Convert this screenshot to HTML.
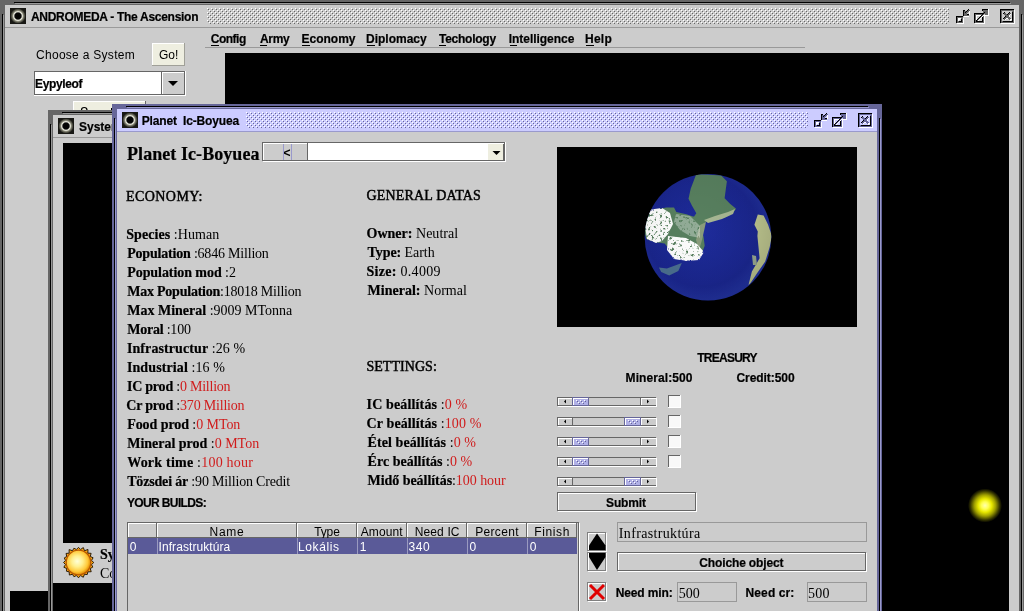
<!DOCTYPE html>
<html><head><meta charset="utf-8"><title>ANDROMEDA - The Ascension</title>
<style>html,body{margin:0;padding:0;background:#cccccc;width:1024px;height:611px;overflow:hidden;font-family:"Liberation Sans",sans-serif;}
svg text{white-space:pre}</style></head><body>
<svg width="1024" height="611" viewBox="0 0 1024 611" shape-rendering="crispEdges" style="display:block;will-change:transform">
<defs>
<radialGradient id="ring" cx="0.5" cy="0.5" r="0.5"><stop offset="0" stop-color="#000"/><stop offset="0.4" stop-color="#060606"/><stop offset="0.57" stop-color="#ecece0"/><stop offset="0.74" stop-color="#7c7c6c"/><stop offset="1" stop-color="#1c1c18"/></radialGradient>
<g id="ficon"><rect x="0" y="0" width="16" height="16" fill="#181814"/><circle cx="8" cy="8" r="7.6" fill="url(#ring)" shape-rendering="geometricPrecision"/></g>
<g id="aclose"><rect x="1" y="1" width="1" height="1" fill="#000"/><rect x="2" y="1" width="1" height="1" fill="#000"/><rect x="3" y="1" width="1" height="1" fill="#000"/><rect x="4" y="1" width="1" height="1" fill="#000"/><rect x="5" y="1" width="1" height="1" fill="#000"/><rect x="6" y="1" width="1" height="1" fill="#000"/><rect x="7" y="1" width="1" height="1" fill="#000"/><rect x="8" y="1" width="1" height="1" fill="#000"/><rect x="9" y="1" width="1" height="1" fill="#000"/><rect x="10" y="1" width="1" height="1" fill="#000"/><rect x="11" y="1" width="1" height="1" fill="#000"/><rect x="12" y="1" width="1" height="1" fill="#000"/><rect x="13" y="1" width="1" height="1" fill="#000"/><rect x="14" y="1" width="1" height="1" fill="#000"/><rect x="1" y="2" width="1" height="1" fill="#000"/><rect x="2" y="2" width="1" height="1" fill="#666699"/><rect x="3" y="2" width="1" height="1" fill="#666699"/><rect x="4" y="2" width="1" height="1" fill="#666699"/><rect x="5" y="2" width="1" height="1" fill="#666699"/><rect x="6" y="2" width="1" height="1" fill="#666699"/><rect x="7" y="2" width="1" height="1" fill="#666699"/><rect x="8" y="2" width="1" height="1" fill="#666699"/><rect x="9" y="2" width="1" height="1" fill="#666699"/><rect x="10" y="2" width="1" height="1" fill="#666699"/><rect x="11" y="2" width="1" height="1" fill="#666699"/><rect x="12" y="2" width="1" height="1" fill="#666699"/><rect x="13" y="2" width="1" height="1" fill="#666699"/><rect x="14" y="2" width="1" height="1" fill="#666699"/><rect x="15" y="2" width="1" height="1" fill="#fff"/><rect x="1" y="3" width="1" height="1" fill="#000"/><rect x="2" y="3" width="1" height="1" fill="#666699"/><rect x="13" y="3" width="1" height="1" fill="#666699"/><rect x="14" y="3" width="1" height="1" fill="#666699"/><rect x="15" y="3" width="1" height="1" fill="#fff"/><rect x="1" y="4" width="1" height="1" fill="#000"/><rect x="2" y="4" width="1" height="1" fill="#666699"/><rect x="5" y="4" width="1" height="1" fill="#000"/><rect x="10" y="4" width="1" height="1" fill="#000"/><rect x="13" y="4" width="1" height="1" fill="#000"/><rect x="14" y="4" width="1" height="1" fill="#666699"/><rect x="15" y="4" width="1" height="1" fill="#fff"/><rect x="1" y="5" width="1" height="1" fill="#000"/><rect x="2" y="5" width="1" height="1" fill="#666699"/><rect x="4" y="5" width="1" height="1" fill="#000"/><rect x="5" y="5" width="1" height="1" fill="#666699"/><rect x="6" y="5" width="1" height="1" fill="#666699"/><rect x="9" y="5" width="1" height="1" fill="#000"/><rect x="10" y="5" width="1" height="1" fill="#666699"/><rect x="11" y="5" width="1" height="1" fill="#666699"/><rect x="13" y="5" width="1" height="1" fill="#000"/><rect x="14" y="5" width="1" height="1" fill="#666699"/><rect x="15" y="5" width="1" height="1" fill="#fff"/><rect x="1" y="6" width="1" height="1" fill="#000"/><rect x="2" y="6" width="1" height="1" fill="#666699"/><rect x="5" y="6" width="1" height="1" fill="#666699"/><rect x="6" y="6" width="1" height="1" fill="#666699"/><rect x="7" y="6" width="1" height="1" fill="#666699"/><rect x="8" y="6" width="1" height="1" fill="#000"/><rect x="9" y="6" width="1" height="1" fill="#666699"/><rect x="10" y="6" width="1" height="1" fill="#666699"/><rect x="11" y="6" width="1" height="1" fill="#fff"/><rect x="13" y="6" width="1" height="1" fill="#000"/><rect x="14" y="6" width="1" height="1" fill="#666699"/><rect x="15" y="6" width="1" height="1" fill="#fff"/><rect x="1" y="7" width="1" height="1" fill="#000"/><rect x="2" y="7" width="1" height="1" fill="#666699"/><rect x="6" y="7" width="1" height="1" fill="#666699"/><rect x="7" y="7" width="1" height="1" fill="#666699"/><rect x="8" y="7" width="1" height="1" fill="#666699"/><rect x="9" y="7" width="1" height="1" fill="#666699"/><rect x="10" y="7" width="1" height="1" fill="#fff"/><rect x="13" y="7" width="1" height="1" fill="#000"/><rect x="14" y="7" width="1" height="1" fill="#666699"/><rect x="15" y="7" width="1" height="1" fill="#fff"/><rect x="1" y="8" width="1" height="1" fill="#000"/><rect x="2" y="8" width="1" height="1" fill="#666699"/><rect x="6" y="8" width="1" height="1" fill="#000"/><rect x="7" y="8" width="1" height="1" fill="#666699"/><rect x="8" y="8" width="1" height="1" fill="#666699"/><rect x="9" y="8" width="1" height="1" fill="#666699"/><rect x="10" y="8" width="1" height="1" fill="#fff"/><rect x="13" y="8" width="1" height="1" fill="#000"/><rect x="14" y="8" width="1" height="1" fill="#666699"/><rect x="15" y="8" width="1" height="1" fill="#fff"/><rect x="1" y="9" width="1" height="1" fill="#000"/><rect x="2" y="9" width="1" height="1" fill="#666699"/><rect x="5" y="9" width="1" height="1" fill="#000"/><rect x="6" y="9" width="1" height="1" fill="#666699"/><rect x="7" y="9" width="1" height="1" fill="#666699"/><rect x="8" y="9" width="1" height="1" fill="#666699"/><rect x="9" y="9" width="1" height="1" fill="#666699"/><rect x="10" y="9" width="1" height="1" fill="#666699"/><rect x="13" y="9" width="1" height="1" fill="#000"/><rect x="14" y="9" width="1" height="1" fill="#666699"/><rect x="15" y="9" width="1" height="1" fill="#fff"/><rect x="1" y="10" width="1" height="1" fill="#000"/><rect x="2" y="10" width="1" height="1" fill="#666699"/><rect x="4" y="10" width="1" height="1" fill="#000"/><rect x="5" y="10" width="1" height="1" fill="#666699"/><rect x="6" y="10" width="1" height="1" fill="#666699"/><rect x="7" y="10" width="1" height="1" fill="#fff"/><rect x="8" y="10" width="1" height="1" fill="#fff"/><rect x="9" y="10" width="1" height="1" fill="#666699"/><rect x="10" y="10" width="1" height="1" fill="#666699"/><rect x="11" y="10" width="1" height="1" fill="#666699"/><rect x="13" y="10" width="1" height="1" fill="#000"/><rect x="14" y="10" width="1" height="1" fill="#666699"/><rect x="15" y="10" width="1" height="1" fill="#fff"/><rect x="1" y="11" width="1" height="1" fill="#000"/><rect x="2" y="11" width="1" height="1" fill="#666699"/><rect x="5" y="11" width="1" height="1" fill="#666699"/><rect x="6" y="11" width="1" height="1" fill="#fff"/><rect x="10" y="11" width="1" height="1" fill="#666699"/><rect x="11" y="11" width="1" height="1" fill="#fff"/><rect x="12" y="11" width="1" height="1" fill="#fff"/><rect x="13" y="11" width="1" height="1" fill="#000"/><rect x="14" y="11" width="1" height="1" fill="#666699"/><rect x="15" y="11" width="1" height="1" fill="#fff"/><rect x="1" y="12" width="1" height="1" fill="#000"/><rect x="2" y="12" width="1" height="1" fill="#666699"/><rect x="11" y="12" width="1" height="1" fill="#fff"/><rect x="13" y="12" width="1" height="1" fill="#000"/><rect x="14" y="12" width="1" height="1" fill="#666699"/><rect x="15" y="12" width="1" height="1" fill="#fff"/><rect x="1" y="13" width="1" height="1" fill="#000"/><rect x="2" y="13" width="1" height="1" fill="#666699"/><rect x="3" y="13" width="1" height="1" fill="#666699"/><rect x="4" y="13" width="1" height="1" fill="#000"/><rect x="5" y="13" width="1" height="1" fill="#000"/><rect x="6" y="13" width="1" height="1" fill="#000"/><rect x="7" y="13" width="1" height="1" fill="#000"/><rect x="8" y="13" width="1" height="1" fill="#000"/><rect x="9" y="13" width="1" height="1" fill="#000"/><rect x="10" y="13" width="1" height="1" fill="#000"/><rect x="11" y="13" width="1" height="1" fill="#000"/><rect x="12" y="13" width="1" height="1" fill="#000"/><rect x="13" y="13" width="1" height="1" fill="#000"/><rect x="14" y="13" width="1" height="1" fill="#666699"/><rect x="15" y="13" width="1" height="1" fill="#fff"/><rect x="1" y="14" width="1" height="1" fill="#000"/><rect x="2" y="14" width="1" height="1" fill="#666699"/><rect x="3" y="14" width="1" height="1" fill="#666699"/><rect x="4" y="14" width="1" height="1" fill="#666699"/><rect x="5" y="14" width="1" height="1" fill="#666699"/><rect x="6" y="14" width="1" height="1" fill="#666699"/><rect x="7" y="14" width="1" height="1" fill="#666699"/><rect x="8" y="14" width="1" height="1" fill="#666699"/><rect x="9" y="14" width="1" height="1" fill="#666699"/><rect x="10" y="14" width="1" height="1" fill="#666699"/><rect x="11" y="14" width="1" height="1" fill="#666699"/><rect x="12" y="14" width="1" height="1" fill="#666699"/><rect x="13" y="14" width="1" height="1" fill="#666699"/><rect x="14" y="14" width="1" height="1" fill="#666699"/><rect x="15" y="14" width="1" height="1" fill="#fff"/><rect x="2" y="15" width="1" height="1" fill="#fff"/><rect x="3" y="15" width="1" height="1" fill="#fff"/><rect x="4" y="15" width="1" height="1" fill="#fff"/><rect x="5" y="15" width="1" height="1" fill="#fff"/><rect x="6" y="15" width="1" height="1" fill="#fff"/><rect x="7" y="15" width="1" height="1" fill="#fff"/><rect x="8" y="15" width="1" height="1" fill="#fff"/><rect x="9" y="15" width="1" height="1" fill="#fff"/><rect x="10" y="15" width="1" height="1" fill="#fff"/><rect x="11" y="15" width="1" height="1" fill="#fff"/><rect x="12" y="15" width="1" height="1" fill="#fff"/><rect x="13" y="15" width="1" height="1" fill="#fff"/><rect x="14" y="15" width="1" height="1" fill="#fff"/><rect x="15" y="15" width="1" height="1" fill="#fff"/></g>
<g id="amax"><rect x="9" y="1" width="1" height="1" fill="#000"/><rect x="10" y="1" width="1" height="1" fill="#000"/><rect x="11" y="1" width="1" height="1" fill="#000"/><rect x="12" y="1" width="1" height="1" fill="#000"/><rect x="13" y="1" width="1" height="1" fill="#000"/><rect x="14" y="1" width="1" height="1" fill="#000"/><rect x="15" y="1" width="1" height="1" fill="#fff"/><rect x="9" y="2" width="1" height="1" fill="#000"/><rect x="10" y="2" width="1" height="1" fill="#666699"/><rect x="11" y="2" width="1" height="1" fill="#666699"/><rect x="12" y="2" width="1" height="1" fill="#666699"/><rect x="13" y="2" width="1" height="1" fill="#666699"/><rect x="14" y="2" width="1" height="1" fill="#666699"/><rect x="15" y="2" width="1" height="1" fill="#fff"/><rect x="10" y="3" width="1" height="1" fill="#666699"/><rect x="11" y="3" width="1" height="1" fill="#666699"/><rect x="12" y="3" width="1" height="1" fill="#666699"/><rect x="13" y="3" width="1" height="1" fill="#666699"/><rect x="14" y="3" width="1" height="1" fill="#666699"/><rect x="15" y="3" width="1" height="1" fill="#fff"/><rect x="10" y="4" width="1" height="1" fill="#666699"/><rect x="11" y="4" width="1" height="1" fill="#000"/><rect x="12" y="4" width="1" height="1" fill="#666699"/><rect x="13" y="4" width="1" height="1" fill="#666699"/><rect x="14" y="4" width="1" height="1" fill="#666699"/><rect x="15" y="4" width="1" height="1" fill="#fff"/><rect x="1" y="5" width="1" height="1" fill="#000"/><rect x="2" y="5" width="1" height="1" fill="#000"/><rect x="3" y="5" width="1" height="1" fill="#000"/><rect x="4" y="5" width="1" height="1" fill="#000"/><rect x="5" y="5" width="1" height="1" fill="#000"/><rect x="6" y="5" width="1" height="1" fill="#000"/><rect x="7" y="5" width="1" height="1" fill="#000"/><rect x="8" y="5" width="1" height="1" fill="#000"/><rect x="9" y="5" width="1" height="1" fill="#000"/><rect x="10" y="5" width="1" height="1" fill="#000"/><rect x="11" y="5" width="1" height="1" fill="#666699"/><rect x="12" y="5" width="1" height="1" fill="#666699"/><rect x="13" y="5" width="1" height="1" fill="#666699"/><rect x="14" y="5" width="1" height="1" fill="#666699"/><rect x="15" y="5" width="1" height="1" fill="#fff"/><rect x="1" y="6" width="1" height="1" fill="#000"/><rect x="2" y="6" width="1" height="1" fill="#666699"/><rect x="3" y="6" width="1" height="1" fill="#666699"/><rect x="4" y="6" width="1" height="1" fill="#666699"/><rect x="5" y="6" width="1" height="1" fill="#666699"/><rect x="6" y="6" width="1" height="1" fill="#666699"/><rect x="7" y="6" width="1" height="1" fill="#666699"/><rect x="8" y="6" width="1" height="1" fill="#666699"/><rect x="9" y="6" width="1" height="1" fill="#000"/><rect x="10" y="6" width="1" height="1" fill="#666699"/><rect x="12" y="6" width="1" height="1" fill="#666699"/><rect x="13" y="6" width="1" height="1" fill="#666699"/><rect x="14" y="6" width="1" height="1" fill="#666699"/><rect x="15" y="6" width="1" height="1" fill="#fff"/><rect x="1" y="7" width="1" height="1" fill="#000"/><rect x="2" y="7" width="1" height="1" fill="#666699"/><rect x="3" y="7" width="1" height="1" fill="#fff"/><rect x="4" y="7" width="1" height="1" fill="#fff"/><rect x="5" y="7" width="1" height="1" fill="#fff"/><rect x="6" y="7" width="1" height="1" fill="#fff"/><rect x="7" y="7" width="1" height="1" fill="#fff"/><rect x="8" y="7" width="1" height="1" fill="#000"/><rect x="9" y="7" width="1" height="1" fill="#666699"/><rect x="10" y="7" width="1" height="1" fill="#fff"/><rect x="11" y="7" width="1" height="1" fill="#fff"/><rect x="12" y="7" width="1" height="1" fill="#fff"/><rect x="13" y="7" width="1" height="1" fill="#fff"/><rect x="14" y="7" width="1" height="1" fill="#fff"/><rect x="15" y="7" width="1" height="1" fill="#fff"/><rect x="1" y="8" width="1" height="1" fill="#000"/><rect x="2" y="8" width="1" height="1" fill="#666699"/><rect x="3" y="8" width="1" height="1" fill="#fff"/><rect x="4" y="8" width="1" height="1" fill="#ccccff"/><rect x="5" y="8" width="1" height="1" fill="#ccccff"/><rect x="6" y="8" width="1" height="1" fill="#ccccff"/><rect x="7" y="8" width="1" height="1" fill="#000"/><rect x="8" y="8" width="1" height="1" fill="#666699"/><rect x="9" y="8" width="1" height="1" fill="#fff"/><rect x="10" y="8" width="1" height="1" fill="#666699"/><rect x="11" y="8" width="1" height="1" fill="#fff"/><rect x="1" y="9" width="1" height="1" fill="#000"/><rect x="2" y="9" width="1" height="1" fill="#666699"/><rect x="3" y="9" width="1" height="1" fill="#fff"/><rect x="4" y="9" width="1" height="1" fill="#ccccff"/><rect x="5" y="9" width="1" height="1" fill="#ccccff"/><rect x="6" y="9" width="1" height="1" fill="#000"/><rect x="7" y="9" width="1" height="1" fill="#666699"/><rect x="8" y="9" width="1" height="1" fill="#fff"/><rect x="9" y="9" width="1" height="1" fill="#000"/><rect x="10" y="9" width="1" height="1" fill="#666699"/><rect x="11" y="9" width="1" height="1" fill="#fff"/><rect x="1" y="10" width="1" height="1" fill="#000"/><rect x="2" y="10" width="1" height="1" fill="#666699"/><rect x="3" y="10" width="1" height="1" fill="#fff"/><rect x="4" y="10" width="1" height="1" fill="#ccccff"/><rect x="5" y="10" width="1" height="1" fill="#000"/><rect x="6" y="10" width="1" height="1" fill="#666699"/><rect x="7" y="10" width="1" height="1" fill="#fff"/><rect x="8" y="10" width="1" height="1" fill="#ccccff"/><rect x="9" y="10" width="1" height="1" fill="#000"/><rect x="10" y="10" width="1" height="1" fill="#666699"/><rect x="11" y="10" width="1" height="1" fill="#fff"/><rect x="1" y="11" width="1" height="1" fill="#000"/><rect x="2" y="11" width="1" height="1" fill="#666699"/><rect x="3" y="11" width="1" height="1" fill="#fff"/><rect x="4" y="11" width="1" height="1" fill="#000"/><rect x="5" y="11" width="1" height="1" fill="#666699"/><rect x="6" y="11" width="1" height="1" fill="#fff"/><rect x="7" y="11" width="1" height="1" fill="#ccccff"/><rect x="8" y="11" width="1" height="1" fill="#ccccff"/><rect x="9" y="11" width="1" height="1" fill="#000"/><rect x="10" y="11" width="1" height="1" fill="#666699"/><rect x="11" y="11" width="1" height="1" fill="#fff"/><rect x="1" y="12" width="1" height="1" fill="#000"/><rect x="2" y="12" width="1" height="1" fill="#666699"/><rect x="3" y="12" width="1" height="1" fill="#000"/><rect x="4" y="12" width="1" height="1" fill="#666699"/><rect x="5" y="12" width="1" height="1" fill="#fff"/><rect x="6" y="12" width="1" height="1" fill="#ccccff"/><rect x="7" y="12" width="1" height="1" fill="#ccccff"/><rect x="8" y="12" width="1" height="1" fill="#ccccff"/><rect x="9" y="12" width="1" height="1" fill="#000"/><rect x="10" y="12" width="1" height="1" fill="#666699"/><rect x="11" y="12" width="1" height="1" fill="#fff"/><rect x="1" y="13" width="1" height="1" fill="#000"/><rect x="2" y="13" width="1" height="1" fill="#666699"/><rect x="3" y="13" width="1" height="1" fill="#000"/><rect x="4" y="13" width="1" height="1" fill="#000"/><rect x="5" y="13" width="1" height="1" fill="#000"/><rect x="6" y="13" width="1" height="1" fill="#000"/><rect x="7" y="13" width="1" height="1" fill="#000"/><rect x="8" y="13" width="1" height="1" fill="#000"/><rect x="9" y="13" width="1" height="1" fill="#000"/><rect x="10" y="13" width="1" height="1" fill="#666699"/><rect x="11" y="13" width="1" height="1" fill="#fff"/><rect x="1" y="14" width="1" height="1" fill="#000"/><rect x="2" y="14" width="1" height="1" fill="#666699"/><rect x="3" y="14" width="1" height="1" fill="#666699"/><rect x="4" y="14" width="1" height="1" fill="#666699"/><rect x="5" y="14" width="1" height="1" fill="#666699"/><rect x="6" y="14" width="1" height="1" fill="#666699"/><rect x="7" y="14" width="1" height="1" fill="#666699"/><rect x="8" y="14" width="1" height="1" fill="#666699"/><rect x="9" y="14" width="1" height="1" fill="#666699"/><rect x="10" y="14" width="1" height="1" fill="#666699"/><rect x="11" y="14" width="1" height="1" fill="#fff"/><rect x="2" y="15" width="1" height="1" fill="#fff"/><rect x="3" y="15" width="1" height="1" fill="#fff"/><rect x="4" y="15" width="1" height="1" fill="#fff"/><rect x="5" y="15" width="1" height="1" fill="#fff"/><rect x="6" y="15" width="1" height="1" fill="#fff"/><rect x="7" y="15" width="1" height="1" fill="#fff"/><rect x="8" y="15" width="1" height="1" fill="#fff"/><rect x="9" y="15" width="1" height="1" fill="#fff"/><rect x="10" y="15" width="1" height="1" fill="#fff"/><rect x="11" y="15" width="1" height="1" fill="#fff"/></g>
<g id="amin"><rect x="13" y="1" width="1" height="1" fill="#000"/><rect x="8" y="2" width="1" height="1" fill="#000"/><rect x="9" y="2" width="1" height="1" fill="#000"/><rect x="12" y="2" width="1" height="1" fill="#000"/><rect x="13" y="2" width="1" height="1" fill="#666699"/><rect x="14" y="2" width="1" height="1" fill="#666699"/><rect x="8" y="3" width="1" height="1" fill="#000"/><rect x="9" y="3" width="1" height="1" fill="#666699"/><rect x="10" y="3" width="1" height="1" fill="#666699"/><rect x="11" y="3" width="1" height="1" fill="#000"/><rect x="12" y="3" width="1" height="1" fill="#666699"/><rect x="13" y="3" width="1" height="1" fill="#666699"/><rect x="14" y="3" width="1" height="1" fill="#fff"/><rect x="8" y="4" width="1" height="1" fill="#000"/><rect x="9" y="4" width="1" height="1" fill="#666699"/><rect x="10" y="4" width="1" height="1" fill="#000"/><rect x="11" y="4" width="1" height="1" fill="#666699"/><rect x="12" y="4" width="1" height="1" fill="#666699"/><rect x="14" y="4" width="1" height="1" fill="#fff"/><rect x="8" y="5" width="1" height="1" fill="#000"/><rect x="9" y="5" width="1" height="1" fill="#666699"/><rect x="10" y="5" width="1" height="1" fill="#666699"/><rect x="11" y="5" width="1" height="1" fill="#666699"/><rect x="14" y="5" width="1" height="1" fill="#fff"/><rect x="8" y="6" width="1" height="1" fill="#000"/><rect x="9" y="6" width="1" height="1" fill="#666699"/><rect x="10" y="6" width="1" height="1" fill="#666699"/><rect x="11" y="6" width="1" height="1" fill="#666699"/><rect x="12" y="6" width="1" height="1" fill="#000"/><rect x="13" y="6" width="1" height="1" fill="#000"/><rect x="14" y="6" width="1" height="1" fill="#fff"/><rect x="8" y="7" width="1" height="1" fill="#000"/><rect x="9" y="7" width="1" height="1" fill="#666699"/><rect x="10" y="7" width="1" height="1" fill="#666699"/><rect x="11" y="7" width="1" height="1" fill="#666699"/><rect x="12" y="7" width="1" height="1" fill="#666699"/><rect x="13" y="7" width="1" height="1" fill="#666699"/><rect x="1" y="8" width="1" height="1" fill="#000"/><rect x="2" y="8" width="1" height="1" fill="#000"/><rect x="3" y="8" width="1" height="1" fill="#000"/><rect x="4" y="8" width="1" height="1" fill="#000"/><rect x="5" y="8" width="1" height="1" fill="#000"/><rect x="6" y="8" width="1" height="1" fill="#000"/><rect x="7" y="8" width="1" height="1" fill="#000"/><rect x="9" y="8" width="1" height="1" fill="#fff"/><rect x="10" y="8" width="1" height="1" fill="#fff"/><rect x="11" y="8" width="1" height="1" fill="#fff"/><rect x="12" y="8" width="1" height="1" fill="#fff"/><rect x="13" y="8" width="1" height="1" fill="#fff"/><rect x="1" y="9" width="1" height="1" fill="#000"/><rect x="2" y="9" width="1" height="1" fill="#666699"/><rect x="3" y="9" width="1" height="1" fill="#666699"/><rect x="4" y="9" width="1" height="1" fill="#666699"/><rect x="5" y="9" width="1" height="1" fill="#666699"/><rect x="6" y="9" width="1" height="1" fill="#666699"/><rect x="7" y="9" width="1" height="1" fill="#666699"/><rect x="1" y="10" width="1" height="1" fill="#000"/><rect x="2" y="10" width="1" height="1" fill="#666699"/><rect x="3" y="10" width="1" height="1" fill="#fff"/><rect x="4" y="10" width="1" height="1" fill="#fff"/><rect x="5" y="10" width="1" height="1" fill="#fff"/><rect x="6" y="10" width="1" height="1" fill="#666699"/><rect x="7" y="10" width="1" height="1" fill="#666699"/><rect x="8" y="10" width="1" height="1" fill="#fff"/><rect x="1" y="11" width="1" height="1" fill="#000"/><rect x="2" y="11" width="1" height="1" fill="#666699"/><rect x="3" y="11" width="1" height="1" fill="#fff"/><rect x="4" y="11" width="1" height="1" fill="#fff"/><rect x="5" y="11" width="1" height="1" fill="#ccccff"/><rect x="6" y="11" width="1" height="1" fill="#000"/><rect x="7" y="11" width="1" height="1" fill="#666699"/><rect x="8" y="11" width="1" height="1" fill="#fff"/><rect x="1" y="12" width="1" height="1" fill="#000"/><rect x="2" y="12" width="1" height="1" fill="#666699"/><rect x="3" y="12" width="1" height="1" fill="#fff"/><rect x="4" y="12" width="1" height="1" fill="#ccccff"/><rect x="5" y="12" width="1" height="1" fill="#ccccff"/><rect x="6" y="12" width="1" height="1" fill="#000"/><rect x="7" y="12" width="1" height="1" fill="#666699"/><rect x="8" y="12" width="1" height="1" fill="#fff"/><rect x="1" y="13" width="1" height="1" fill="#000"/><rect x="2" y="13" width="1" height="1" fill="#666699"/><rect x="3" y="13" width="1" height="1" fill="#666699"/><rect x="4" y="13" width="1" height="1" fill="#000"/><rect x="5" y="13" width="1" height="1" fill="#000"/><rect x="6" y="13" width="1" height="1" fill="#000"/><rect x="7" y="13" width="1" height="1" fill="#666699"/><rect x="8" y="13" width="1" height="1" fill="#fff"/><rect x="1" y="14" width="1" height="1" fill="#000"/><rect x="2" y="14" width="1" height="1" fill="#666699"/><rect x="3" y="14" width="1" height="1" fill="#666699"/><rect x="4" y="14" width="1" height="1" fill="#666699"/><rect x="5" y="14" width="1" height="1" fill="#666699"/><rect x="6" y="14" width="1" height="1" fill="#666699"/><rect x="7" y="14" width="1" height="1" fill="#666699"/><rect x="8" y="14" width="1" height="1" fill="#fff"/><rect x="2" y="15" width="1" height="1" fill="#fff"/><rect x="3" y="15" width="1" height="1" fill="#fff"/><rect x="4" y="15" width="1" height="1" fill="#fff"/><rect x="5" y="15" width="1" height="1" fill="#fff"/><rect x="6" y="15" width="1" height="1" fill="#fff"/><rect x="7" y="15" width="1" height="1" fill="#fff"/><rect x="8" y="15" width="1" height="1" fill="#fff"/></g>
<g id="iclose"><rect x="1" y="1" width="1" height="1" fill="#000"/><rect x="2" y="1" width="1" height="1" fill="#000"/><rect x="3" y="1" width="1" height="1" fill="#000"/><rect x="4" y="1" width="1" height="1" fill="#000"/><rect x="5" y="1" width="1" height="1" fill="#000"/><rect x="6" y="1" width="1" height="1" fill="#000"/><rect x="7" y="1" width="1" height="1" fill="#000"/><rect x="8" y="1" width="1" height="1" fill="#000"/><rect x="9" y="1" width="1" height="1" fill="#000"/><rect x="10" y="1" width="1" height="1" fill="#000"/><rect x="11" y="1" width="1" height="1" fill="#000"/><rect x="12" y="1" width="1" height="1" fill="#000"/><rect x="13" y="1" width="1" height="1" fill="#000"/><rect x="14" y="1" width="1" height="1" fill="#000"/><rect x="1" y="2" width="1" height="1" fill="#000"/><rect x="2" y="2" width="1" height="1" fill="#666666"/><rect x="3" y="2" width="1" height="1" fill="#666666"/><rect x="4" y="2" width="1" height="1" fill="#666666"/><rect x="5" y="2" width="1" height="1" fill="#666666"/><rect x="6" y="2" width="1" height="1" fill="#666666"/><rect x="7" y="2" width="1" height="1" fill="#666666"/><rect x="8" y="2" width="1" height="1" fill="#666666"/><rect x="9" y="2" width="1" height="1" fill="#666666"/><rect x="10" y="2" width="1" height="1" fill="#666666"/><rect x="11" y="2" width="1" height="1" fill="#666666"/><rect x="12" y="2" width="1" height="1" fill="#666666"/><rect x="13" y="2" width="1" height="1" fill="#666666"/><rect x="14" y="2" width="1" height="1" fill="#666666"/><rect x="15" y="2" width="1" height="1" fill="#fff"/><rect x="1" y="3" width="1" height="1" fill="#000"/><rect x="2" y="3" width="1" height="1" fill="#666666"/><rect x="13" y="3" width="1" height="1" fill="#666666"/><rect x="14" y="3" width="1" height="1" fill="#666666"/><rect x="15" y="3" width="1" height="1" fill="#fff"/><rect x="1" y="4" width="1" height="1" fill="#000"/><rect x="2" y="4" width="1" height="1" fill="#666666"/><rect x="5" y="4" width="1" height="1" fill="#000"/><rect x="10" y="4" width="1" height="1" fill="#000"/><rect x="13" y="4" width="1" height="1" fill="#000"/><rect x="14" y="4" width="1" height="1" fill="#666666"/><rect x="15" y="4" width="1" height="1" fill="#fff"/><rect x="1" y="5" width="1" height="1" fill="#000"/><rect x="2" y="5" width="1" height="1" fill="#666666"/><rect x="4" y="5" width="1" height="1" fill="#000"/><rect x="5" y="5" width="1" height="1" fill="#666666"/><rect x="6" y="5" width="1" height="1" fill="#666666"/><rect x="9" y="5" width="1" height="1" fill="#000"/><rect x="10" y="5" width="1" height="1" fill="#666666"/><rect x="11" y="5" width="1" height="1" fill="#666666"/><rect x="13" y="5" width="1" height="1" fill="#000"/><rect x="14" y="5" width="1" height="1" fill="#666666"/><rect x="15" y="5" width="1" height="1" fill="#fff"/><rect x="1" y="6" width="1" height="1" fill="#000"/><rect x="2" y="6" width="1" height="1" fill="#666666"/><rect x="5" y="6" width="1" height="1" fill="#666666"/><rect x="6" y="6" width="1" height="1" fill="#666666"/><rect x="7" y="6" width="1" height="1" fill="#666666"/><rect x="8" y="6" width="1" height="1" fill="#000"/><rect x="9" y="6" width="1" height="1" fill="#666666"/><rect x="10" y="6" width="1" height="1" fill="#666666"/><rect x="11" y="6" width="1" height="1" fill="#fff"/><rect x="13" y="6" width="1" height="1" fill="#000"/><rect x="14" y="6" width="1" height="1" fill="#666666"/><rect x="15" y="6" width="1" height="1" fill="#fff"/><rect x="1" y="7" width="1" height="1" fill="#000"/><rect x="2" y="7" width="1" height="1" fill="#666666"/><rect x="6" y="7" width="1" height="1" fill="#666666"/><rect x="7" y="7" width="1" height="1" fill="#666666"/><rect x="8" y="7" width="1" height="1" fill="#666666"/><rect x="9" y="7" width="1" height="1" fill="#666666"/><rect x="10" y="7" width="1" height="1" fill="#fff"/><rect x="13" y="7" width="1" height="1" fill="#000"/><rect x="14" y="7" width="1" height="1" fill="#666666"/><rect x="15" y="7" width="1" height="1" fill="#fff"/><rect x="1" y="8" width="1" height="1" fill="#000"/><rect x="2" y="8" width="1" height="1" fill="#666666"/><rect x="6" y="8" width="1" height="1" fill="#000"/><rect x="7" y="8" width="1" height="1" fill="#666666"/><rect x="8" y="8" width="1" height="1" fill="#666666"/><rect x="9" y="8" width="1" height="1" fill="#666666"/><rect x="10" y="8" width="1" height="1" fill="#fff"/><rect x="13" y="8" width="1" height="1" fill="#000"/><rect x="14" y="8" width="1" height="1" fill="#666666"/><rect x="15" y="8" width="1" height="1" fill="#fff"/><rect x="1" y="9" width="1" height="1" fill="#000"/><rect x="2" y="9" width="1" height="1" fill="#666666"/><rect x="5" y="9" width="1" height="1" fill="#000"/><rect x="6" y="9" width="1" height="1" fill="#666666"/><rect x="7" y="9" width="1" height="1" fill="#666666"/><rect x="8" y="9" width="1" height="1" fill="#666666"/><rect x="9" y="9" width="1" height="1" fill="#666666"/><rect x="10" y="9" width="1" height="1" fill="#666666"/><rect x="13" y="9" width="1" height="1" fill="#000"/><rect x="14" y="9" width="1" height="1" fill="#666666"/><rect x="15" y="9" width="1" height="1" fill="#fff"/><rect x="1" y="10" width="1" height="1" fill="#000"/><rect x="2" y="10" width="1" height="1" fill="#666666"/><rect x="4" y="10" width="1" height="1" fill="#000"/><rect x="5" y="10" width="1" height="1" fill="#666666"/><rect x="6" y="10" width="1" height="1" fill="#666666"/><rect x="7" y="10" width="1" height="1" fill="#fff"/><rect x="8" y="10" width="1" height="1" fill="#fff"/><rect x="9" y="10" width="1" height="1" fill="#666666"/><rect x="10" y="10" width="1" height="1" fill="#666666"/><rect x="11" y="10" width="1" height="1" fill="#666666"/><rect x="13" y="10" width="1" height="1" fill="#000"/><rect x="14" y="10" width="1" height="1" fill="#666666"/><rect x="15" y="10" width="1" height="1" fill="#fff"/><rect x="1" y="11" width="1" height="1" fill="#000"/><rect x="2" y="11" width="1" height="1" fill="#666666"/><rect x="5" y="11" width="1" height="1" fill="#666666"/><rect x="6" y="11" width="1" height="1" fill="#fff"/><rect x="10" y="11" width="1" height="1" fill="#666666"/><rect x="11" y="11" width="1" height="1" fill="#fff"/><rect x="12" y="11" width="1" height="1" fill="#fff"/><rect x="13" y="11" width="1" height="1" fill="#000"/><rect x="14" y="11" width="1" height="1" fill="#666666"/><rect x="15" y="11" width="1" height="1" fill="#fff"/><rect x="1" y="12" width="1" height="1" fill="#000"/><rect x="2" y="12" width="1" height="1" fill="#666666"/><rect x="11" y="12" width="1" height="1" fill="#fff"/><rect x="13" y="12" width="1" height="1" fill="#000"/><rect x="14" y="12" width="1" height="1" fill="#666666"/><rect x="15" y="12" width="1" height="1" fill="#fff"/><rect x="1" y="13" width="1" height="1" fill="#000"/><rect x="2" y="13" width="1" height="1" fill="#666666"/><rect x="3" y="13" width="1" height="1" fill="#666666"/><rect x="4" y="13" width="1" height="1" fill="#000"/><rect x="5" y="13" width="1" height="1" fill="#000"/><rect x="6" y="13" width="1" height="1" fill="#000"/><rect x="7" y="13" width="1" height="1" fill="#000"/><rect x="8" y="13" width="1" height="1" fill="#000"/><rect x="9" y="13" width="1" height="1" fill="#000"/><rect x="10" y="13" width="1" height="1" fill="#000"/><rect x="11" y="13" width="1" height="1" fill="#000"/><rect x="12" y="13" width="1" height="1" fill="#000"/><rect x="13" y="13" width="1" height="1" fill="#000"/><rect x="14" y="13" width="1" height="1" fill="#666666"/><rect x="15" y="13" width="1" height="1" fill="#fff"/><rect x="1" y="14" width="1" height="1" fill="#000"/><rect x="2" y="14" width="1" height="1" fill="#666666"/><rect x="3" y="14" width="1" height="1" fill="#666666"/><rect x="4" y="14" width="1" height="1" fill="#666666"/><rect x="5" y="14" width="1" height="1" fill="#666666"/><rect x="6" y="14" width="1" height="1" fill="#666666"/><rect x="7" y="14" width="1" height="1" fill="#666666"/><rect x="8" y="14" width="1" height="1" fill="#666666"/><rect x="9" y="14" width="1" height="1" fill="#666666"/><rect x="10" y="14" width="1" height="1" fill="#666666"/><rect x="11" y="14" width="1" height="1" fill="#666666"/><rect x="12" y="14" width="1" height="1" fill="#666666"/><rect x="13" y="14" width="1" height="1" fill="#666666"/><rect x="14" y="14" width="1" height="1" fill="#666666"/><rect x="15" y="14" width="1" height="1" fill="#fff"/><rect x="2" y="15" width="1" height="1" fill="#fff"/><rect x="3" y="15" width="1" height="1" fill="#fff"/><rect x="4" y="15" width="1" height="1" fill="#fff"/><rect x="5" y="15" width="1" height="1" fill="#fff"/><rect x="6" y="15" width="1" height="1" fill="#fff"/><rect x="7" y="15" width="1" height="1" fill="#fff"/><rect x="8" y="15" width="1" height="1" fill="#fff"/><rect x="9" y="15" width="1" height="1" fill="#fff"/><rect x="10" y="15" width="1" height="1" fill="#fff"/><rect x="11" y="15" width="1" height="1" fill="#fff"/><rect x="12" y="15" width="1" height="1" fill="#fff"/><rect x="13" y="15" width="1" height="1" fill="#fff"/><rect x="14" y="15" width="1" height="1" fill="#fff"/><rect x="15" y="15" width="1" height="1" fill="#fff"/></g>
<g id="imax"><rect x="9" y="1" width="1" height="1" fill="#000"/><rect x="10" y="1" width="1" height="1" fill="#000"/><rect x="11" y="1" width="1" height="1" fill="#000"/><rect x="12" y="1" width="1" height="1" fill="#000"/><rect x="13" y="1" width="1" height="1" fill="#000"/><rect x="14" y="1" width="1" height="1" fill="#000"/><rect x="15" y="1" width="1" height="1" fill="#fff"/><rect x="9" y="2" width="1" height="1" fill="#000"/><rect x="10" y="2" width="1" height="1" fill="#666666"/><rect x="11" y="2" width="1" height="1" fill="#666666"/><rect x="12" y="2" width="1" height="1" fill="#666666"/><rect x="13" y="2" width="1" height="1" fill="#666666"/><rect x="14" y="2" width="1" height="1" fill="#666666"/><rect x="15" y="2" width="1" height="1" fill="#fff"/><rect x="10" y="3" width="1" height="1" fill="#666666"/><rect x="11" y="3" width="1" height="1" fill="#666666"/><rect x="12" y="3" width="1" height="1" fill="#666666"/><rect x="13" y="3" width="1" height="1" fill="#666666"/><rect x="14" y="3" width="1" height="1" fill="#666666"/><rect x="15" y="3" width="1" height="1" fill="#fff"/><rect x="10" y="4" width="1" height="1" fill="#666666"/><rect x="11" y="4" width="1" height="1" fill="#000"/><rect x="12" y="4" width="1" height="1" fill="#666666"/><rect x="13" y="4" width="1" height="1" fill="#666666"/><rect x="14" y="4" width="1" height="1" fill="#666666"/><rect x="15" y="4" width="1" height="1" fill="#fff"/><rect x="1" y="5" width="1" height="1" fill="#000"/><rect x="2" y="5" width="1" height="1" fill="#000"/><rect x="3" y="5" width="1" height="1" fill="#000"/><rect x="4" y="5" width="1" height="1" fill="#000"/><rect x="5" y="5" width="1" height="1" fill="#000"/><rect x="6" y="5" width="1" height="1" fill="#000"/><rect x="7" y="5" width="1" height="1" fill="#000"/><rect x="8" y="5" width="1" height="1" fill="#000"/><rect x="9" y="5" width="1" height="1" fill="#000"/><rect x="10" y="5" width="1" height="1" fill="#000"/><rect x="11" y="5" width="1" height="1" fill="#666666"/><rect x="12" y="5" width="1" height="1" fill="#666666"/><rect x="13" y="5" width="1" height="1" fill="#666666"/><rect x="14" y="5" width="1" height="1" fill="#666666"/><rect x="15" y="5" width="1" height="1" fill="#fff"/><rect x="1" y="6" width="1" height="1" fill="#000"/><rect x="2" y="6" width="1" height="1" fill="#666666"/><rect x="3" y="6" width="1" height="1" fill="#666666"/><rect x="4" y="6" width="1" height="1" fill="#666666"/><rect x="5" y="6" width="1" height="1" fill="#666666"/><rect x="6" y="6" width="1" height="1" fill="#666666"/><rect x="7" y="6" width="1" height="1" fill="#666666"/><rect x="8" y="6" width="1" height="1" fill="#666666"/><rect x="9" y="6" width="1" height="1" fill="#000"/><rect x="10" y="6" width="1" height="1" fill="#666666"/><rect x="12" y="6" width="1" height="1" fill="#666666"/><rect x="13" y="6" width="1" height="1" fill="#666666"/><rect x="14" y="6" width="1" height="1" fill="#666666"/><rect x="15" y="6" width="1" height="1" fill="#fff"/><rect x="1" y="7" width="1" height="1" fill="#000"/><rect x="2" y="7" width="1" height="1" fill="#666666"/><rect x="3" y="7" width="1" height="1" fill="#fff"/><rect x="4" y="7" width="1" height="1" fill="#fff"/><rect x="5" y="7" width="1" height="1" fill="#fff"/><rect x="6" y="7" width="1" height="1" fill="#fff"/><rect x="7" y="7" width="1" height="1" fill="#fff"/><rect x="8" y="7" width="1" height="1" fill="#000"/><rect x="9" y="7" width="1" height="1" fill="#666666"/><rect x="10" y="7" width="1" height="1" fill="#fff"/><rect x="11" y="7" width="1" height="1" fill="#fff"/><rect x="12" y="7" width="1" height="1" fill="#fff"/><rect x="13" y="7" width="1" height="1" fill="#fff"/><rect x="14" y="7" width="1" height="1" fill="#fff"/><rect x="15" y="7" width="1" height="1" fill="#fff"/><rect x="1" y="8" width="1" height="1" fill="#000"/><rect x="2" y="8" width="1" height="1" fill="#666666"/><rect x="3" y="8" width="1" height="1" fill="#fff"/><rect x="4" y="8" width="1" height="1" fill="#cccccc"/><rect x="5" y="8" width="1" height="1" fill="#cccccc"/><rect x="6" y="8" width="1" height="1" fill="#cccccc"/><rect x="7" y="8" width="1" height="1" fill="#000"/><rect x="8" y="8" width="1" height="1" fill="#666666"/><rect x="9" y="8" width="1" height="1" fill="#fff"/><rect x="10" y="8" width="1" height="1" fill="#666666"/><rect x="11" y="8" width="1" height="1" fill="#fff"/><rect x="1" y="9" width="1" height="1" fill="#000"/><rect x="2" y="9" width="1" height="1" fill="#666666"/><rect x="3" y="9" width="1" height="1" fill="#fff"/><rect x="4" y="9" width="1" height="1" fill="#cccccc"/><rect x="5" y="9" width="1" height="1" fill="#cccccc"/><rect x="6" y="9" width="1" height="1" fill="#000"/><rect x="7" y="9" width="1" height="1" fill="#666666"/><rect x="8" y="9" width="1" height="1" fill="#fff"/><rect x="9" y="9" width="1" height="1" fill="#000"/><rect x="10" y="9" width="1" height="1" fill="#666666"/><rect x="11" y="9" width="1" height="1" fill="#fff"/><rect x="1" y="10" width="1" height="1" fill="#000"/><rect x="2" y="10" width="1" height="1" fill="#666666"/><rect x="3" y="10" width="1" height="1" fill="#fff"/><rect x="4" y="10" width="1" height="1" fill="#cccccc"/><rect x="5" y="10" width="1" height="1" fill="#000"/><rect x="6" y="10" width="1" height="1" fill="#666666"/><rect x="7" y="10" width="1" height="1" fill="#fff"/><rect x="8" y="10" width="1" height="1" fill="#cccccc"/><rect x="9" y="10" width="1" height="1" fill="#000"/><rect x="10" y="10" width="1" height="1" fill="#666666"/><rect x="11" y="10" width="1" height="1" fill="#fff"/><rect x="1" y="11" width="1" height="1" fill="#000"/><rect x="2" y="11" width="1" height="1" fill="#666666"/><rect x="3" y="11" width="1" height="1" fill="#fff"/><rect x="4" y="11" width="1" height="1" fill="#000"/><rect x="5" y="11" width="1" height="1" fill="#666666"/><rect x="6" y="11" width="1" height="1" fill="#fff"/><rect x="7" y="11" width="1" height="1" fill="#cccccc"/><rect x="8" y="11" width="1" height="1" fill="#cccccc"/><rect x="9" y="11" width="1" height="1" fill="#000"/><rect x="10" y="11" width="1" height="1" fill="#666666"/><rect x="11" y="11" width="1" height="1" fill="#fff"/><rect x="1" y="12" width="1" height="1" fill="#000"/><rect x="2" y="12" width="1" height="1" fill="#666666"/><rect x="3" y="12" width="1" height="1" fill="#000"/><rect x="4" y="12" width="1" height="1" fill="#666666"/><rect x="5" y="12" width="1" height="1" fill="#fff"/><rect x="6" y="12" width="1" height="1" fill="#cccccc"/><rect x="7" y="12" width="1" height="1" fill="#cccccc"/><rect x="8" y="12" width="1" height="1" fill="#cccccc"/><rect x="9" y="12" width="1" height="1" fill="#000"/><rect x="10" y="12" width="1" height="1" fill="#666666"/><rect x="11" y="12" width="1" height="1" fill="#fff"/><rect x="1" y="13" width="1" height="1" fill="#000"/><rect x="2" y="13" width="1" height="1" fill="#666666"/><rect x="3" y="13" width="1" height="1" fill="#000"/><rect x="4" y="13" width="1" height="1" fill="#000"/><rect x="5" y="13" width="1" height="1" fill="#000"/><rect x="6" y="13" width="1" height="1" fill="#000"/><rect x="7" y="13" width="1" height="1" fill="#000"/><rect x="8" y="13" width="1" height="1" fill="#000"/><rect x="9" y="13" width="1" height="1" fill="#000"/><rect x="10" y="13" width="1" height="1" fill="#666666"/><rect x="11" y="13" width="1" height="1" fill="#fff"/><rect x="1" y="14" width="1" height="1" fill="#000"/><rect x="2" y="14" width="1" height="1" fill="#666666"/><rect x="3" y="14" width="1" height="1" fill="#666666"/><rect x="4" y="14" width="1" height="1" fill="#666666"/><rect x="5" y="14" width="1" height="1" fill="#666666"/><rect x="6" y="14" width="1" height="1" fill="#666666"/><rect x="7" y="14" width="1" height="1" fill="#666666"/><rect x="8" y="14" width="1" height="1" fill="#666666"/><rect x="9" y="14" width="1" height="1" fill="#666666"/><rect x="10" y="14" width="1" height="1" fill="#666666"/><rect x="11" y="14" width="1" height="1" fill="#fff"/><rect x="2" y="15" width="1" height="1" fill="#fff"/><rect x="3" y="15" width="1" height="1" fill="#fff"/><rect x="4" y="15" width="1" height="1" fill="#fff"/><rect x="5" y="15" width="1" height="1" fill="#fff"/><rect x="6" y="15" width="1" height="1" fill="#fff"/><rect x="7" y="15" width="1" height="1" fill="#fff"/><rect x="8" y="15" width="1" height="1" fill="#fff"/><rect x="9" y="15" width="1" height="1" fill="#fff"/><rect x="10" y="15" width="1" height="1" fill="#fff"/><rect x="11" y="15" width="1" height="1" fill="#fff"/></g>
<g id="imin"><rect x="13" y="1" width="1" height="1" fill="#000"/><rect x="8" y="2" width="1" height="1" fill="#000"/><rect x="9" y="2" width="1" height="1" fill="#000"/><rect x="12" y="2" width="1" height="1" fill="#000"/><rect x="13" y="2" width="1" height="1" fill="#666666"/><rect x="14" y="2" width="1" height="1" fill="#666666"/><rect x="8" y="3" width="1" height="1" fill="#000"/><rect x="9" y="3" width="1" height="1" fill="#666666"/><rect x="10" y="3" width="1" height="1" fill="#666666"/><rect x="11" y="3" width="1" height="1" fill="#000"/><rect x="12" y="3" width="1" height="1" fill="#666666"/><rect x="13" y="3" width="1" height="1" fill="#666666"/><rect x="14" y="3" width="1" height="1" fill="#fff"/><rect x="8" y="4" width="1" height="1" fill="#000"/><rect x="9" y="4" width="1" height="1" fill="#666666"/><rect x="10" y="4" width="1" height="1" fill="#000"/><rect x="11" y="4" width="1" height="1" fill="#666666"/><rect x="12" y="4" width="1" height="1" fill="#666666"/><rect x="14" y="4" width="1" height="1" fill="#fff"/><rect x="8" y="5" width="1" height="1" fill="#000"/><rect x="9" y="5" width="1" height="1" fill="#666666"/><rect x="10" y="5" width="1" height="1" fill="#666666"/><rect x="11" y="5" width="1" height="1" fill="#666666"/><rect x="14" y="5" width="1" height="1" fill="#fff"/><rect x="8" y="6" width="1" height="1" fill="#000"/><rect x="9" y="6" width="1" height="1" fill="#666666"/><rect x="10" y="6" width="1" height="1" fill="#666666"/><rect x="11" y="6" width="1" height="1" fill="#666666"/><rect x="12" y="6" width="1" height="1" fill="#000"/><rect x="13" y="6" width="1" height="1" fill="#000"/><rect x="14" y="6" width="1" height="1" fill="#fff"/><rect x="8" y="7" width="1" height="1" fill="#000"/><rect x="9" y="7" width="1" height="1" fill="#666666"/><rect x="10" y="7" width="1" height="1" fill="#666666"/><rect x="11" y="7" width="1" height="1" fill="#666666"/><rect x="12" y="7" width="1" height="1" fill="#666666"/><rect x="13" y="7" width="1" height="1" fill="#666666"/><rect x="1" y="8" width="1" height="1" fill="#000"/><rect x="2" y="8" width="1" height="1" fill="#000"/><rect x="3" y="8" width="1" height="1" fill="#000"/><rect x="4" y="8" width="1" height="1" fill="#000"/><rect x="5" y="8" width="1" height="1" fill="#000"/><rect x="6" y="8" width="1" height="1" fill="#000"/><rect x="7" y="8" width="1" height="1" fill="#000"/><rect x="9" y="8" width="1" height="1" fill="#fff"/><rect x="10" y="8" width="1" height="1" fill="#fff"/><rect x="11" y="8" width="1" height="1" fill="#fff"/><rect x="12" y="8" width="1" height="1" fill="#fff"/><rect x="13" y="8" width="1" height="1" fill="#fff"/><rect x="1" y="9" width="1" height="1" fill="#000"/><rect x="2" y="9" width="1" height="1" fill="#666666"/><rect x="3" y="9" width="1" height="1" fill="#666666"/><rect x="4" y="9" width="1" height="1" fill="#666666"/><rect x="5" y="9" width="1" height="1" fill="#666666"/><rect x="6" y="9" width="1" height="1" fill="#666666"/><rect x="7" y="9" width="1" height="1" fill="#666666"/><rect x="1" y="10" width="1" height="1" fill="#000"/><rect x="2" y="10" width="1" height="1" fill="#666666"/><rect x="3" y="10" width="1" height="1" fill="#fff"/><rect x="4" y="10" width="1" height="1" fill="#fff"/><rect x="5" y="10" width="1" height="1" fill="#fff"/><rect x="6" y="10" width="1" height="1" fill="#666666"/><rect x="7" y="10" width="1" height="1" fill="#666666"/><rect x="8" y="10" width="1" height="1" fill="#fff"/><rect x="1" y="11" width="1" height="1" fill="#000"/><rect x="2" y="11" width="1" height="1" fill="#666666"/><rect x="3" y="11" width="1" height="1" fill="#fff"/><rect x="4" y="11" width="1" height="1" fill="#fff"/><rect x="5" y="11" width="1" height="1" fill="#cccccc"/><rect x="6" y="11" width="1" height="1" fill="#000"/><rect x="7" y="11" width="1" height="1" fill="#666666"/><rect x="8" y="11" width="1" height="1" fill="#fff"/><rect x="1" y="12" width="1" height="1" fill="#000"/><rect x="2" y="12" width="1" height="1" fill="#666666"/><rect x="3" y="12" width="1" height="1" fill="#fff"/><rect x="4" y="12" width="1" height="1" fill="#cccccc"/><rect x="5" y="12" width="1" height="1" fill="#cccccc"/><rect x="6" y="12" width="1" height="1" fill="#000"/><rect x="7" y="12" width="1" height="1" fill="#666666"/><rect x="8" y="12" width="1" height="1" fill="#fff"/><rect x="1" y="13" width="1" height="1" fill="#000"/><rect x="2" y="13" width="1" height="1" fill="#666666"/><rect x="3" y="13" width="1" height="1" fill="#666666"/><rect x="4" y="13" width="1" height="1" fill="#000"/><rect x="5" y="13" width="1" height="1" fill="#000"/><rect x="6" y="13" width="1" height="1" fill="#000"/><rect x="7" y="13" width="1" height="1" fill="#666666"/><rect x="8" y="13" width="1" height="1" fill="#fff"/><rect x="1" y="14" width="1" height="1" fill="#000"/><rect x="2" y="14" width="1" height="1" fill="#666666"/><rect x="3" y="14" width="1" height="1" fill="#666666"/><rect x="4" y="14" width="1" height="1" fill="#666666"/><rect x="5" y="14" width="1" height="1" fill="#666666"/><rect x="6" y="14" width="1" height="1" fill="#666666"/><rect x="7" y="14" width="1" height="1" fill="#666666"/><rect x="8" y="14" width="1" height="1" fill="#fff"/><rect x="2" y="15" width="1" height="1" fill="#fff"/><rect x="3" y="15" width="1" height="1" fill="#fff"/><rect x="4" y="15" width="1" height="1" fill="#fff"/><rect x="5" y="15" width="1" height="1" fill="#fff"/><rect x="6" y="15" width="1" height="1" fill="#fff"/><rect x="7" y="15" width="1" height="1" fill="#fff"/><rect x="8" y="15" width="1" height="1" fill="#fff"/></g>
<radialGradient id="sung" cx="0.45" cy="0.45" r="0.55"><stop offset="0" stop-color="#ffffd8"/><stop offset="0.4" stop-color="#fff090"/><stop offset="0.78" stop-color="#ffc838"/><stop offset="1" stop-color="#e08800"/></radialGradient>
<radialGradient id="glow" cx="0.5" cy="0.5" r="0.5"><stop offset="0" stop-color="#ffffb0"/><stop offset="0.22" stop-color="#ffff50"/><stop offset="0.4" stop-color="#e8e800"/><stop offset="0.62" stop-color="#a0a000"/><stop offset="0.85" stop-color="#383800"/><stop offset="1" stop-color="#000"/></radialGradient>
<radialGradient id="ocean" cx="0.45" cy="0.45" r="0.55"><stop offset="0" stop-color="#1e2c9c"/><stop offset="0.8" stop-color="#1a268e"/><stop offset="1" stop-color="#2232a0"/></radialGradient>
<radialGradient id="shade" cx="0.42" cy="0.42" r="0.6"><stop offset="0" stop-color="#000" stop-opacity="0"/><stop offset="0.75" stop-color="#000" stop-opacity="0.05"/><stop offset="1" stop-color="#000" stop-opacity="0.12"/></radialGradient>
<filter id="soft" x="-10%" y="-10%" width="120%" height="120%"><feGaussianBlur stdDeviation="0.7"/></filter>
<filter id="speck" x="0" y="0" width="100%" height="100%"><feTurbulence type="fractalNoise" baseFrequency="0.35" numOctaves="3" seed="5" result="n"/><feColorMatrix in="n" type="matrix" values="0 0 0 0 1  0 0 0 0 1  0 0 0 0 1  0 0 0 6 -1.6" result="m"/><feComposite in="SourceGraphic" in2="m" operator="in" result="c"/><feGaussianBlur in="c" stdDeviation="0.6"/></filter>
</defs>
<rect x="0" y="0" width="1024" height="700" fill="#666666" />
<rect x="15" y="3" width="996" height="1" fill="#999999" />
<rect x="3" y="15" width="1" height="672" fill="#999999" />
<rect x="1022" y="15" width="1" height="672" fill="#999999" />
<rect x="14" y="2" width="996" height="1" fill="#000000" />
<rect x="2" y="14" width="1" height="672" fill="#000000" />
<rect x="1021" y="14" width="1" height="672" fill="#000000" />
<rect x="5" y="5" width="1014" height="23" fill="#cccccc" />
<rect x="5" y="27" width="1014" height="1" fill="#9a9a9a" />
<use href="#ficon" x="10" y="8"/>
<text x="31.0" y="21" font-family="&quot;Liberation Sans&quot;, sans-serif" font-size="12" font-weight="bold" fill="#000" stroke="#000" stroke-width="0.2" text-anchor="start" textLength="167.47" lengthAdjust="spacing" >ANDROMEDA - The Ascension</text>
<pattern id="bp1" x="207" y="8" width="4" height="4" patternUnits="userSpaceOnUse"><rect x="0" y="0" width="1" height="1" fill="#ffffff"/><rect x="2" y="2" width="1" height="1" fill="#ffffff"/><rect x="1" y="1" width="1" height="1" fill="#666666"/><rect x="3" y="3" width="1" height="1" fill="#666666"/></pattern>
<rect x="207" y="8" width="742" height="16" fill="url(#bp1)" />
<use href="#imin" x="955" y="8"/>
<use href="#imax" x="973" y="8"/>
<use href="#iclose" x="999" y="8"/>
<rect x="5" y="28" width="1014" height="700" fill="#cccccc" />
<text x="36.0" y="59" font-family="&quot;Liberation Sans&quot;, sans-serif" font-size="12" font-weight="normal" fill="#000" text-anchor="start" textLength="98.72" lengthAdjust="spacing" >Choose a System</text>
<rect x="152" y="43" width="33" height="23" fill="#eeeee0" />
<rect x="152" y="43" width="33" height="1" fill="#ffffff" />
<rect x="152" y="43" width="1" height="23" fill="#ffffff" />
<rect x="152" y="65" width="33" height="1" fill="#a0a098" />
<rect x="184" y="43" width="1" height="23" fill="#a0a098" />
<text x="159.0" y="59" font-family="&quot;Liberation Sans&quot;, sans-serif" font-size="12" font-weight="normal" fill="#000" text-anchor="start" textLength="19.34" lengthAdjust="spacing" >Go!</text>
<rect x="34" y="71" width="152" height="25" fill="#ffffff" />
<rect x="34" y="71" width="151" height="1" fill="#666666" />
<rect x="34" y="71" width="1" height="24" fill="#666666" />
<rect x="34" y="94" width="151" height="1" fill="#666666" />
<rect x="184" y="71" width="1" height="24" fill="#666666" />
<rect x="35" y="95" width="151" height="1" fill="#ffffff" />
<rect x="185" y="72" width="1" height="24" fill="#ffffff" />
<rect x="162" y="72" width="22" height="22" fill="#cccccc" />
<rect x="161" y="72" width="1" height="22" fill="#666666" />
<rect x="162" y="72" width="22" height="1" fill="#ffffff" />
<rect x="162" y="72" width="1" height="22" fill="#ffffff" />
<polygon points="168,81 178,81 173,86" fill="#000" shape-rendering="geometricPrecision"/>
<text x="35.0" y="88" font-family="&quot;Liberation Sans&quot;, sans-serif" font-size="12" font-weight="bold" fill="#000" stroke="#000" stroke-width="0.2" text-anchor="start" textLength="47.42" lengthAdjust="spacing" >Eypyleof</text>
<rect x="73" y="101" width="72" height="20" fill="#eeeee0" />
<rect x="73" y="101" width="72" height="1" fill="#ffffff" />
<rect x="73" y="101" width="1" height="20" fill="#ffffff" />
<rect x="145" y="101" width="1" height="20" fill="#666666" />
<path d="M81.5,110 Q81.5,107.5 84.2,107.5 Q87,107.5 87,110" stroke="#000" stroke-width="1.2" fill="none" shape-rendering="geometricPrecision"/>
<rect x="111" y="108" width="1" height="2" fill="#000" />
<rect x="10" y="591" width="38" height="30" fill="#000" />
<rect x="205" y="47" width="600" height="1" fill="#999999" />
<text x="210.7" y="43" font-family="&quot;Liberation Sans&quot;, sans-serif" font-size="12" font-weight="bold" fill="#000" stroke="#000" stroke-width="0.2" text-anchor="start" textLength="35.60" lengthAdjust="spacing" >Config</text>
<rect x="211" y="45" width="8" height="1" fill="#000" />
<text x="260.0" y="43" font-family="&quot;Liberation Sans&quot;, sans-serif" font-size="12" font-weight="bold" fill="#000" stroke="#000" stroke-width="0.2" text-anchor="start" textLength="29.69" lengthAdjust="spacing" >Army</text>
<rect x="260" y="45" width="7" height="1" fill="#000" />
<text x="301.5" y="43" font-family="&quot;Liberation Sans&quot;, sans-serif" font-size="12" font-weight="bold" fill="#000" stroke="#000" stroke-width="0.2" text-anchor="start" textLength="54.02" lengthAdjust="spacing" >Economy</text>
<rect x="302" y="45" width="8" height="1" fill="#000" />
<text x="366.0" y="43" font-family="&quot;Liberation Sans&quot;, sans-serif" font-size="12" font-weight="bold" fill="#000" stroke="#000" stroke-width="0.2" text-anchor="start" textLength="60.69" lengthAdjust="spacing" >Diplomacy</text>
<rect x="367" y="45" width="8" height="1" fill="#000" />
<text x="439.0" y="43" font-family="&quot;Liberation Sans&quot;, sans-serif" font-size="12" font-weight="bold" fill="#000" stroke="#000" stroke-width="0.2" text-anchor="start" textLength="57.12" lengthAdjust="spacing" >Techology</text>
<rect x="439" y="45" width="7" height="1" fill="#000" />
<text x="508.7" y="43" font-family="&quot;Liberation Sans&quot;, sans-serif" font-size="12" font-weight="bold" fill="#000" stroke="#000" stroke-width="0.2" text-anchor="start" textLength="65.63" lengthAdjust="spacing" >Intelligence</text>
<rect x="510" y="45" width="7" height="1" fill="#000" />
<text x="585.0" y="43" font-family="&quot;Liberation Sans&quot;, sans-serif" font-size="12" font-weight="bold" fill="#000" stroke="#000" stroke-width="0.2" text-anchor="start" textLength="26.82" lengthAdjust="spacing" >Help</text>
<rect x="586" y="45" width="8" height="1" fill="#000" />
<rect x="225" y="53" width="784" height="600" fill="#000" />
<circle cx="985" cy="505.5" r="17" fill="url(#glow)" shape-rendering="geometricPrecision"/>
<rect x="48" y="110" width="200" height="600" fill="#666666" />
<rect x="63" y="113" width="172" height="1" fill="#999999" />
<rect x="51" y="125" width="1" height="572" fill="#999999" />
<rect x="246" y="125" width="1" height="572" fill="#999999" />
<rect x="62" y="112" width="172" height="1" fill="#000000" />
<rect x="50" y="124" width="1" height="572" fill="#000000" />
<rect x="245" y="124" width="1" height="572" fill="#000000" />
<rect x="53" y="115" width="190" height="23" fill="#cccccc" />
<rect x="53" y="137" width="190" height="1" fill="#9a9a9a" />
<use href="#ficon" x="58" y="118"/>
<text x="79" y="131" font-family="&quot;Liberation Sans&quot;, sans-serif" font-size="12" font-weight="bold" fill="#000" stroke="#000" stroke-width="0.2" text-anchor="start" >System</text>
<rect x="53" y="138" width="190" height="600" fill="#cccccc" />
<rect x="63" y="143" width="60" height="400" fill="#000" />
<rect x="53" y="583" width="70" height="40" fill="#000" />
<g shape-rendering="geometricPrecision">
<polygon points="93.75,562.50 91.54,564.56 92.78,567.14 90.26,568.49 91.21,571.73 87.83,571.83 87.26,574.56 84.49,574.26 83.31,577.29 80.56,575.54 78.50,577.81 76.44,575.54 73.90,576.65 72.51,574.26 69.38,575.05 69.17,571.83 66.48,571.23 66.74,568.49 63.85,567.26 65.46,564.56 63.60,562.50 65.46,560.44 64.30,557.89 66.74,556.51 66.05,553.45 69.17,553.17 69.12,549.59 72.51,550.74 73.87,548.26 76.44,549.46 78.50,547.39 80.56,549.46 83.34,547.59 84.49,550.74 87.98,549.45 87.83,553.17 91.13,553.33 90.26,556.51 93.10,557.75 91.54,560.44" fill="#f4a818" stroke="#1a0c00" stroke-width="0.9"/>
<circle cx="78.5" cy="562.5" r="12.3" fill="url(#sung)" stroke="#b85800" stroke-width="1.3"/>
</g>
<text x="100" y="558.5" font-family="&quot;Liberation Serif&quot;, serif" font-size="14" font-weight="bold" fill="#000" stroke="#000" stroke-width="0.2" text-anchor="start" >System</text>
<text x="100" y="577.5" font-family="&quot;Liberation Serif&quot;, serif" font-size="14" font-weight="normal" fill="#000" text-anchor="start" >Coordinates</text>
<rect x="112" y="104" width="770" height="600" fill="#666699" />
<rect x="127" y="107" width="742" height="1" fill="#9999cc" />
<rect x="115" y="119" width="1" height="572" fill="#9999cc" />
<rect x="880" y="119" width="1" height="572" fill="#9999cc" />
<rect x="126" y="106" width="742" height="1" fill="#000000" />
<rect x="114" y="118" width="1" height="572" fill="#000000" />
<rect x="879" y="118" width="1" height="572" fill="#000000" />
<rect x="117" y="109" width="760" height="23" fill="#ccccff" />
<rect x="117" y="131" width="760" height="1" fill="#9999cc" />
<use href="#ficon" x="122" y="112"/>
<text x="141.7" y="125" font-family="&quot;Liberation Sans&quot;, sans-serif" font-size="12" font-weight="bold" fill="#000" stroke="#000" stroke-width="0.2" text-anchor="start" textLength="97.43" lengthAdjust="spacing" >Planet  Ic-Boyuea</text>
<pattern id="bp2" x="246" y="112" width="4" height="4" patternUnits="userSpaceOnUse"><rect x="0" y="0" width="1" height="1" fill="#ffffff"/><rect x="2" y="2" width="1" height="1" fill="#ffffff"/><rect x="1" y="1" width="1" height="1" fill="#666699"/><rect x="3" y="3" width="1" height="1" fill="#666699"/></pattern>
<rect x="246" y="112" width="562" height="16" fill="url(#bp2)" />
<use href="#amin" x="813" y="112"/>
<use href="#amax" x="831" y="112"/>
<use href="#aclose" x="857" y="112"/>
<rect x="117" y="132" width="760" height="600" fill="#cccccc" />
<text x="127.0" y="160" font-family="&quot;Liberation Serif&quot;, serif" font-size="18" font-weight="bold" fill="#000" stroke="#000" stroke-width="0.2" text-anchor="start" textLength="132.48" lengthAdjust="spacing" >Planet Ic-Boyuea</text>
<rect x="263" y="161" width="46" height="1" fill="#ffffff" />
<rect x="308" y="143" width="1" height="19" fill="#ffffff" />
<rect x="263" y="143" width="45" height="1" fill="#ffffff" />
<rect x="263" y="143" width="1" height="18" fill="#ffffff" />
<rect x="262" y="142" width="46" height="1" fill="#666666" />
<rect x="262" y="142" width="1" height="19" fill="#666666" />
<rect x="262" y="160" width="46" height="1" fill="#666666" />
<rect x="307" y="142" width="1" height="19" fill="#666666" />
<rect x="264" y="144" width="43" height="16" fill="#cccccc" />
<rect x="283" y="144" width="1" height="16" fill="#9999cc" />
<rect x="291" y="144" width="1" height="16" fill="#9999cc" />
<text x="287" y="157" font-family="&quot;Liberation Sans&quot;, sans-serif" font-size="12" font-weight="bold" fill="#000" text-anchor="middle" >&lt;</text>
<rect x="308" y="142" width="198" height="20" fill="#ffffff" />
<rect x="308" y="142" width="197" height="1" fill="#666666" />
<rect x="308" y="160" width="197" height="1" fill="#666666" />
<rect x="504" y="142" width="1" height="19" fill="#666666" />
<rect x="308" y="161" width="198" height="1" fill="#ffffff" />
<rect x="505" y="142" width="1" height="20" fill="#ffffff" />
<rect x="488" y="144" width="16" height="16" fill="#eeeee0" />
<rect x="488" y="160" width="16" height="1" fill="#666666" />
<rect x="503" y="144" width="1" height="17" fill="#666666" />
<polygon points="492.5,151 500.5,151 496.5,155" fill="#000" shape-rendering="geometricPrecision"/>
<text x="126.0" y="201" font-family="&quot;Liberation Serif&quot;, serif" font-size="14" font-weight="normal" fill="#000" stroke="#000" stroke-width="0.45" text-anchor="start" textLength="76.39" lengthAdjust="spacing" >ECONOMY:</text>
<text x="366.5" y="200" font-family="&quot;Liberation Serif&quot;, serif" font-size="14" font-weight="normal" fill="#000" stroke="#000" stroke-width="0.45" text-anchor="start" textLength="114.31" lengthAdjust="spacing" >GENERAL DATAS</text>
<text x="126.2" y="239" font-family="&quot;Liberation Serif&quot;, serif" font-size="14" font-weight="normal" fill="#000" text-anchor="start" textLength="92.97" lengthAdjust="spacing" ><tspan font-weight="bold" stroke="#000" stroke-width="0.2">Species</tspan> :Human</text>
<text x="127.2" y="258" font-family="&quot;Liberation Serif&quot;, serif" font-size="14" font-weight="normal" fill="#000" text-anchor="start" textLength="141.67" lengthAdjust="spacing" ><tspan font-weight="bold" stroke="#000" stroke-width="0.2">Population</tspan> :6846 Million</text>
<text x="127.2" y="277" font-family="&quot;Liberation Serif&quot;, serif" font-size="14" font-weight="normal" fill="#000" text-anchor="start" textLength="108.70" lengthAdjust="spacing" ><tspan font-weight="bold" stroke="#000" stroke-width="0.2">Population mod</tspan> :2</text>
<text x="127.2" y="296" font-family="&quot;Liberation Serif&quot;, serif" font-size="14" font-weight="normal" fill="#000" text-anchor="start" textLength="174.28" lengthAdjust="spacing" ><tspan font-weight="bold" stroke="#000" stroke-width="0.2">Max Population</tspan>:18018 Million</text>
<text x="127.2" y="315" font-family="&quot;Liberation Serif&quot;, serif" font-size="14" font-weight="normal" fill="#000" text-anchor="start" textLength="165.06" lengthAdjust="spacing" ><tspan font-weight="bold" stroke="#000" stroke-width="0.2">Max Mineral</tspan> :9009 MTonna</text>
<text x="127.2" y="334" font-family="&quot;Liberation Serif&quot;, serif" font-size="14" font-weight="normal" fill="#000" text-anchor="start" textLength="63.72" lengthAdjust="spacing" ><tspan font-weight="bold" stroke="#000" stroke-width="0.2">Moral</tspan> :100</text>
<text x="126.9" y="353" font-family="&quot;Liberation Serif&quot;, serif" font-size="14" font-weight="normal" fill="#000" text-anchor="start" textLength="118.27" lengthAdjust="spacing" ><tspan font-weight="bold" stroke="#000" stroke-width="0.2">Infrastructur</tspan> :26 %</text>
<text x="126.9" y="372" font-family="&quot;Liberation Serif&quot;, serif" font-size="14" font-weight="normal" fill="#000" text-anchor="start" textLength="98.08" lengthAdjust="spacing" ><tspan font-weight="bold" stroke="#000" stroke-width="0.2">Industrial</tspan> :16 %</text>
<text x="126.9" y="391" font-family="&quot;Liberation Serif&quot;, serif" font-size="14" font-weight="normal" fill="#000" text-anchor="start" textLength="103.70" lengthAdjust="spacing" ><tspan font-weight="bold" stroke="#000" stroke-width="0.2">IC prod</tspan> :<tspan fill="#d01c1c">0 Million</tspan></text>
<text x="126.2" y="410" font-family="&quot;Liberation Serif&quot;, serif" font-size="14" font-weight="normal" fill="#000" text-anchor="start" textLength="118.42" lengthAdjust="spacing" ><tspan font-weight="bold" stroke="#000" stroke-width="0.2">Cr prod</tspan> :<tspan fill="#d01c1c">370 Million</tspan></text>
<text x="127.2" y="429" font-family="&quot;Liberation Serif&quot;, serif" font-size="14" font-weight="normal" fill="#000" text-anchor="start" textLength="113.10" lengthAdjust="spacing" ><tspan font-weight="bold" stroke="#000" stroke-width="0.2">Food prod</tspan> :<tspan fill="#d01c1c">0 MTon</tspan></text>
<text x="127.2" y="448" font-family="&quot;Liberation Serif&quot;, serif" font-size="14" font-weight="normal" fill="#000" text-anchor="start" textLength="131.97" lengthAdjust="spacing" ><tspan font-weight="bold" stroke="#000" stroke-width="0.2">Mineral prod</tspan> :<tspan fill="#d01c1c">0 MTon</tspan></text>
<text x="127.2" y="467" font-family="&quot;Liberation Serif&quot;, serif" font-size="14" font-weight="normal" fill="#000" text-anchor="start" textLength="125.72" lengthAdjust="spacing" ><tspan font-weight="bold" stroke="#000" stroke-width="0.2">Work time</tspan> :<tspan fill="#d01c1c">100 hour</tspan></text>
<text x="127.2" y="486" font-family="&quot;Liberation Serif&quot;, serif" font-size="14" font-weight="normal" fill="#000" text-anchor="start" textLength="163.00" lengthAdjust="spacing" ><tspan font-weight="bold" stroke="#000" stroke-width="0.2">Tözsdei ár</tspan> :90 Million Credit</text>
<text x="366.5" y="238" font-family="&quot;Liberation Serif&quot;, serif" font-size="14" font-weight="normal" fill="#000" text-anchor="start" textLength="91.58" lengthAdjust="spacing" ><tspan font-weight="bold" stroke="#000" stroke-width="0.2">Owner:</tspan> Neutral</text>
<text x="367.5" y="257" font-family="&quot;Liberation Serif&quot;, serif" font-size="14" font-weight="normal" fill="#000" text-anchor="start" textLength="67.20" lengthAdjust="spacing" ><tspan font-weight="bold" stroke="#000" stroke-width="0.2">Type:</tspan> Earth</text>
<text x="366.5" y="276" font-family="&quot;Liberation Serif&quot;, serif" font-size="14" font-weight="normal" fill="#000" text-anchor="start" textLength="73.97" lengthAdjust="spacing" ><tspan font-weight="bold" stroke="#000" stroke-width="0.2">Size:</tspan> 0.4009</text>
<text x="367.5" y="295" font-family="&quot;Liberation Serif&quot;, serif" font-size="14" font-weight="normal" fill="#000" text-anchor="start" textLength="99.34" lengthAdjust="spacing" ><tspan font-weight="bold" stroke="#000" stroke-width="0.2">Mineral:</tspan> Normal</text>
<text x="366.4" y="371" font-family="&quot;Liberation Serif&quot;, serif" font-size="14" font-weight="normal" fill="#000" stroke="#000" stroke-width="0.45" text-anchor="start" textLength="70.40" lengthAdjust="spacing" >SETTINGS:</text>
<text x="366.6" y="409" font-family="&quot;Liberation Serif&quot;, serif" font-size="14" font-weight="normal" fill="#000" text-anchor="start" textLength="100.61" lengthAdjust="spacing" ><tspan font-weight="bold" stroke="#000" stroke-width="0.2">IC beállítás</tspan> :<tspan fill="#d01c1c">0 %</tspan></text>
<text x="366.6" y="428" font-family="&quot;Liberation Serif&quot;, serif" font-size="14" font-weight="normal" fill="#000" text-anchor="start" textLength="114.72" lengthAdjust="spacing" ><tspan font-weight="bold" stroke="#000" stroke-width="0.2">Cr beállítás</tspan> :<tspan fill="#d01c1c">100 %</tspan></text>
<text x="367.6" y="447" font-family="&quot;Liberation Serif&quot;, serif" font-size="14" font-weight="normal" fill="#000" text-anchor="start" textLength="108.35" lengthAdjust="spacing" ><tspan font-weight="bold" stroke="#000" stroke-width="0.2">Étel beállítás</tspan> :<tspan fill="#d01c1c">0 %</tspan></text>
<text x="367.6" y="466" font-family="&quot;Liberation Serif&quot;, serif" font-size="14" font-weight="normal" fill="#000" text-anchor="start" textLength="104.56" lengthAdjust="spacing" ><tspan font-weight="bold" stroke="#000" stroke-width="0.2">Érc beállítás</tspan> :<tspan fill="#d01c1c">0 %</tspan></text>
<text x="367.6" y="485" font-family="&quot;Liberation Serif&quot;, serif" font-size="14" font-weight="normal" fill="#000" text-anchor="start" textLength="138.03" lengthAdjust="spacing" ><tspan font-weight="bold" stroke="#000" stroke-width="0.2">Midő beállítás</tspan>:<tspan fill="#d01c1c">100 hour</tspan></text>
<text x="127.0" y="507" font-family="&quot;Liberation Sans&quot;, sans-serif" font-size="12" font-weight="bold" fill="#000" stroke="#000" stroke-width="0.2" text-anchor="start" textLength="79.67" lengthAdjust="spacing" >YOUR BUILDS:</text>
<rect x="557" y="147" width="300" height="180" fill="#000" />
<g shape-rendering="geometricPrecision">
<clipPath id="gclip"><circle cx="708" cy="237.2" r="63.3"/></clipPath>
<circle cx="708" cy="237.2" r="63.3" fill="url(#ocean)"/>
<g clip-path="url(#gclip)"><g filter="url(#soft)">
<polygon points="696.3,174.0 721.2,175.4 726.9,181.2 725.8,189.2 724.6,198.3 730.3,204.1 736.1,208.7 732.6,213.2 724.6,217.8 715.5,217.8 708.6,220.1 704.0,223.5 702.0,232.0 703.5,236.6 704.7,245.7 701.2,254.9 695.5,259.5 684.0,259.5 676.0,257.2 670.3,250.3 664.6,243.4 655.4,242.3 646.3,238.9 644.0,230.0 647.3,214.3 655.1,209.8 666.3,207.6 674.0,207.6 676.3,212.0 686.3,214.3 693.0,216.5 694.1,216.5 696.3,213.2 691.9,205.4 688.5,198.7 690.7,188.7" fill="#58805e" />
<polygon points="704.0,220.0 715.0,216.0 728.0,212.0 735.0,209.0 733.0,214.0 722.0,219.0 708.0,223.0" fill="#a8b894" />
<polygon points="700.0,225.0 706.0,222.0 702.0,240.0 699.0,250.0 696.0,240.0" fill="#8a9c7c" />
<polygon points="757.8,214.4 763.6,215.5 768.1,224.7 771.9,236.0 769.7,247.1 765.2,261.6 757.4,272.7 750.7,282.7 748.5,285.0 751.9,271.6 759.6,258.3 758.5,247.1 757.4,236.0 757.8,231.6 754.4,224.7" fill="#bcc48e" />
<polygon points="752.0,255.0 756.0,256.0 757.0,265.0 753.0,265.0" fill="#98a890" />
<polygon points="658.9,267.5 666.9,268.6 681.8,262.9 678.3,270.9 669.2,275.5 661.2,272.0" fill="#4c7090" />
</g><g filter="url(#speck)">
<polygon points="647.0,210.0 662.0,208.0 670.0,213.0 673.0,224.0 668.0,234.0 662.0,241.0 656.0,243.0 647.0,239.0 645.0,226.0" fill="#ffffff" />
<polygon points="668.0,236.0 686.0,238.0 697.0,244.0 704.0,252.0 699.0,260.0 686.0,261.0 674.0,259.0 667.0,250.0" fill="#ffffff" />
<polygon points="676.0,214.0 690.0,216.0 700.0,226.0 700.0,238.0 690.0,236.0 680.0,230.0 674.0,222.0" fill="#ffffff" opacity="0.35"/>
</g></g>
<circle cx="708" cy="237.2" r="63.3" fill="url(#shade)"/>
</g>
<text x="697.2" y="362" font-family="&quot;Liberation Sans&quot;, sans-serif" font-size="12" font-weight="bold" fill="#000" stroke="#000" stroke-width="0.2" text-anchor="start" textLength="60.36" lengthAdjust="spacing" >TREASURY</text>
<text x="625.6" y="382" font-family="&quot;Liberation Sans&quot;, sans-serif" font-size="12" font-weight="bold" fill="#000" stroke="#000" stroke-width="0.2" text-anchor="start" textLength="66.83" lengthAdjust="spacing" >Mineral:500</text>
<text x="736.5" y="382" font-family="&quot;Liberation Sans&quot;, sans-serif" font-size="12" font-weight="bold" fill="#000" stroke="#000" stroke-width="0.2" text-anchor="start" textLength="58.09" lengthAdjust="spacing" >Credit:500</text>
<rect x="557" y="397" width="100" height="10" fill="#cccccc" />
<rect x="557" y="397" width="99" height="1" fill="#666666" />
<rect x="557" y="405" width="99" height="1" fill="#666666" />
<rect x="558" y="406" width="99" height="1" fill="#ffffff" />
<rect x="557" y="397" width="1" height="9" fill="#666666" />
<rect x="656" y="398" width="1" height="9" fill="#ffffff" />
<rect x="572" y="397" width="1" height="9" fill="#666666" />
<rect x="558" y="398" width="14" height="1" fill="#ffffff" />
<rect x="558" y="398" width="1" height="7" fill="#ffffff" />
<polygon points="566,399.5 566,403.5 564,401.5" fill="#000" shape-rendering="geometricPrecision"/>
<rect x="640" y="397" width="1" height="9" fill="#666666" />
<rect x="641" y="398" width="15" height="1" fill="#ffffff" />
<rect x="641" y="398" width="1" height="7" fill="#ffffff" />
<polygon points="647,399.5 647,403.5 649,401.5" fill="#000" shape-rendering="geometricPrecision"/>
<rect x="572" y="397" width="17" height="9" fill="#b0b0e6" />
<rect x="572" y="397" width="17" height="1" fill="#666699" />
<rect x="572" y="405" width="17" height="1" fill="#666699" />
<rect x="572" y="397" width="1" height="9" fill="#666699" />
<rect x="588" y="397" width="1" height="9" fill="#666699" />
<rect x="573" y="398" width="15" height="1" fill="#ffffff" />
<rect x="573" y="398" width="1" height="7" fill="#ffffff" />
<pattern id="bp3" x="576" y="400" width="4" height="4" patternUnits="userSpaceOnUse"><rect x="0" y="0" width="1" height="1" fill="#ffffff"/><rect x="2" y="2" width="1" height="1" fill="#ffffff"/><rect x="1" y="1" width="1" height="1" fill="#666699"/><rect x="3" y="3" width="1" height="1" fill="#666699"/></pattern>
<rect x="576" y="400" width="10" height="4" fill="url(#bp3)" />
<rect x="557" y="417" width="100" height="10" fill="#cccccc" />
<rect x="557" y="417" width="99" height="1" fill="#666666" />
<rect x="557" y="425" width="99" height="1" fill="#666666" />
<rect x="558" y="426" width="99" height="1" fill="#ffffff" />
<rect x="557" y="417" width="1" height="9" fill="#666666" />
<rect x="656" y="418" width="1" height="9" fill="#ffffff" />
<rect x="572" y="417" width="1" height="9" fill="#666666" />
<rect x="558" y="418" width="14" height="1" fill="#ffffff" />
<rect x="558" y="418" width="1" height="7" fill="#ffffff" />
<polygon points="566,419.5 566,423.5 564,421.5" fill="#000" shape-rendering="geometricPrecision"/>
<rect x="640" y="417" width="1" height="9" fill="#666666" />
<rect x="641" y="418" width="15" height="1" fill="#ffffff" />
<rect x="641" y="418" width="1" height="7" fill="#ffffff" />
<polygon points="647,419.5 647,423.5 649,421.5" fill="#000" shape-rendering="geometricPrecision"/>
<rect x="624" y="417" width="17" height="9" fill="#b0b0e6" />
<rect x="624" y="417" width="17" height="1" fill="#666699" />
<rect x="624" y="425" width="17" height="1" fill="#666699" />
<rect x="624" y="417" width="1" height="9" fill="#666699" />
<rect x="640" y="417" width="1" height="9" fill="#666699" />
<rect x="625" y="418" width="15" height="1" fill="#ffffff" />
<rect x="625" y="418" width="1" height="7" fill="#ffffff" />
<pattern id="bp4" x="628" y="420" width="4" height="4" patternUnits="userSpaceOnUse"><rect x="0" y="0" width="1" height="1" fill="#ffffff"/><rect x="2" y="2" width="1" height="1" fill="#ffffff"/><rect x="1" y="1" width="1" height="1" fill="#666699"/><rect x="3" y="3" width="1" height="1" fill="#666699"/></pattern>
<rect x="628" y="420" width="10" height="4" fill="url(#bp4)" />
<rect x="557" y="437" width="100" height="10" fill="#cccccc" />
<rect x="557" y="437" width="99" height="1" fill="#666666" />
<rect x="557" y="445" width="99" height="1" fill="#666666" />
<rect x="558" y="446" width="99" height="1" fill="#ffffff" />
<rect x="557" y="437" width="1" height="9" fill="#666666" />
<rect x="656" y="438" width="1" height="9" fill="#ffffff" />
<rect x="572" y="437" width="1" height="9" fill="#666666" />
<rect x="558" y="438" width="14" height="1" fill="#ffffff" />
<rect x="558" y="438" width="1" height="7" fill="#ffffff" />
<polygon points="566,439.5 566,443.5 564,441.5" fill="#000" shape-rendering="geometricPrecision"/>
<rect x="640" y="437" width="1" height="9" fill="#666666" />
<rect x="641" y="438" width="15" height="1" fill="#ffffff" />
<rect x="641" y="438" width="1" height="7" fill="#ffffff" />
<polygon points="647,439.5 647,443.5 649,441.5" fill="#000" shape-rendering="geometricPrecision"/>
<rect x="572" y="437" width="17" height="9" fill="#b0b0e6" />
<rect x="572" y="437" width="17" height="1" fill="#666699" />
<rect x="572" y="445" width="17" height="1" fill="#666699" />
<rect x="572" y="437" width="1" height="9" fill="#666699" />
<rect x="588" y="437" width="1" height="9" fill="#666699" />
<rect x="573" y="438" width="15" height="1" fill="#ffffff" />
<rect x="573" y="438" width="1" height="7" fill="#ffffff" />
<pattern id="bp5" x="576" y="440" width="4" height="4" patternUnits="userSpaceOnUse"><rect x="0" y="0" width="1" height="1" fill="#ffffff"/><rect x="2" y="2" width="1" height="1" fill="#ffffff"/><rect x="1" y="1" width="1" height="1" fill="#666699"/><rect x="3" y="3" width="1" height="1" fill="#666699"/></pattern>
<rect x="576" y="440" width="10" height="4" fill="url(#bp5)" />
<rect x="557" y="457" width="100" height="10" fill="#cccccc" />
<rect x="557" y="457" width="99" height="1" fill="#666666" />
<rect x="557" y="465" width="99" height="1" fill="#666666" />
<rect x="558" y="466" width="99" height="1" fill="#ffffff" />
<rect x="557" y="457" width="1" height="9" fill="#666666" />
<rect x="656" y="458" width="1" height="9" fill="#ffffff" />
<rect x="572" y="457" width="1" height="9" fill="#666666" />
<rect x="558" y="458" width="14" height="1" fill="#ffffff" />
<rect x="558" y="458" width="1" height="7" fill="#ffffff" />
<polygon points="566,459.5 566,463.5 564,461.5" fill="#000" shape-rendering="geometricPrecision"/>
<rect x="640" y="457" width="1" height="9" fill="#666666" />
<rect x="641" y="458" width="15" height="1" fill="#ffffff" />
<rect x="641" y="458" width="1" height="7" fill="#ffffff" />
<polygon points="647,459.5 647,463.5 649,461.5" fill="#000" shape-rendering="geometricPrecision"/>
<rect x="572" y="457" width="17" height="9" fill="#b0b0e6" />
<rect x="572" y="457" width="17" height="1" fill="#666699" />
<rect x="572" y="465" width="17" height="1" fill="#666699" />
<rect x="572" y="457" width="1" height="9" fill="#666699" />
<rect x="588" y="457" width="1" height="9" fill="#666699" />
<rect x="573" y="458" width="15" height="1" fill="#ffffff" />
<rect x="573" y="458" width="1" height="7" fill="#ffffff" />
<pattern id="bp6" x="576" y="460" width="4" height="4" patternUnits="userSpaceOnUse"><rect x="0" y="0" width="1" height="1" fill="#ffffff"/><rect x="2" y="2" width="1" height="1" fill="#ffffff"/><rect x="1" y="1" width="1" height="1" fill="#666699"/><rect x="3" y="3" width="1" height="1" fill="#666699"/></pattern>
<rect x="576" y="460" width="10" height="4" fill="url(#bp6)" />
<rect x="557" y="477" width="100" height="10" fill="#cccccc" />
<rect x="557" y="477" width="99" height="1" fill="#666666" />
<rect x="557" y="485" width="99" height="1" fill="#666666" />
<rect x="558" y="486" width="99" height="1" fill="#ffffff" />
<rect x="557" y="477" width="1" height="9" fill="#666666" />
<rect x="656" y="478" width="1" height="9" fill="#ffffff" />
<rect x="572" y="477" width="1" height="9" fill="#666666" />
<rect x="558" y="478" width="14" height="1" fill="#ffffff" />
<rect x="558" y="478" width="1" height="7" fill="#ffffff" />
<polygon points="566,479.5 566,483.5 564,481.5" fill="#000" shape-rendering="geometricPrecision"/>
<rect x="640" y="477" width="1" height="9" fill="#666666" />
<rect x="641" y="478" width="15" height="1" fill="#ffffff" />
<rect x="641" y="478" width="1" height="7" fill="#ffffff" />
<polygon points="647,479.5 647,483.5 649,481.5" fill="#000" shape-rendering="geometricPrecision"/>
<rect x="624" y="477" width="17" height="9" fill="#b0b0e6" />
<rect x="624" y="477" width="17" height="1" fill="#666699" />
<rect x="624" y="485" width="17" height="1" fill="#666699" />
<rect x="624" y="477" width="1" height="9" fill="#666699" />
<rect x="640" y="477" width="1" height="9" fill="#666699" />
<rect x="625" y="478" width="15" height="1" fill="#ffffff" />
<rect x="625" y="478" width="1" height="7" fill="#ffffff" />
<pattern id="bp7" x="628" y="480" width="4" height="4" patternUnits="userSpaceOnUse"><rect x="0" y="0" width="1" height="1" fill="#ffffff"/><rect x="2" y="2" width="1" height="1" fill="#ffffff"/><rect x="1" y="1" width="1" height="1" fill="#666699"/><rect x="3" y="3" width="1" height="1" fill="#666699"/></pattern>
<rect x="628" y="480" width="10" height="4" fill="url(#bp7)" />
<rect x="668" y="395" width="13" height="13" fill="#f8f8f8" />
<rect x="668" y="395" width="12" height="1" fill="#666666" />
<rect x="668" y="395" width="1" height="12" fill="#666666" />
<rect x="669" y="407" width="12" height="1" fill="#ffffff" />
<rect x="680" y="396" width="1" height="12" fill="#ffffff" />
<rect x="668" y="415" width="13" height="13" fill="#f8f8f8" />
<rect x="668" y="415" width="12" height="1" fill="#666666" />
<rect x="668" y="415" width="1" height="12" fill="#666666" />
<rect x="669" y="427" width="12" height="1" fill="#ffffff" />
<rect x="680" y="416" width="1" height="12" fill="#ffffff" />
<rect x="668" y="435" width="13" height="13" fill="#f8f8f8" />
<rect x="668" y="435" width="12" height="1" fill="#666666" />
<rect x="668" y="435" width="1" height="12" fill="#666666" />
<rect x="669" y="447" width="12" height="1" fill="#ffffff" />
<rect x="680" y="436" width="1" height="12" fill="#ffffff" />
<rect x="668" y="455" width="13" height="13" fill="#f8f8f8" />
<rect x="668" y="455" width="12" height="1" fill="#666666" />
<rect x="668" y="455" width="1" height="12" fill="#666666" />
<rect x="669" y="467" width="12" height="1" fill="#ffffff" />
<rect x="680" y="456" width="1" height="12" fill="#ffffff" />
<rect x="558" y="511" width="139" height="1" fill="#ffffff" />
<rect x="696" y="493" width="1" height="19" fill="#ffffff" />
<rect x="558" y="493" width="138" height="1" fill="#ffffff" />
<rect x="558" y="493" width="1" height="18" fill="#ffffff" />
<rect x="557" y="492" width="139" height="1" fill="#666666" />
<rect x="557" y="492" width="1" height="19" fill="#666666" />
<rect x="557" y="510" width="139" height="1" fill="#666666" />
<rect x="695" y="492" width="1" height="19" fill="#666666" />
<text x="606.0" y="507" font-family="&quot;Liberation Sans&quot;, sans-serif" font-size="12" font-weight="bold" fill="#000" stroke="#000" stroke-width="0.2" text-anchor="start" textLength="40.07" lengthAdjust="spacing" >Submit</text>
<rect x="127" y="522" width="452" height="1" fill="#666666" />
<rect x="127" y="522" width="1" height="179" fill="#666666" />
<rect x="578" y="522" width="1" height="179" fill="#666666" />
<rect x="579" y="523" width="1" height="178" fill="#ffffff" />
<rect x="128" y="523" width="29" height="15" fill="#cccccc" />
<rect x="128" y="523" width="29" height="1" fill="#ffffff" />
<rect x="128" y="523" width="1" height="15" fill="#ffffff" />
<rect x="156" y="523" width="1" height="15" fill="#666666" />
<rect x="128" y="537" width="29" height="1" fill="#666666" />
<rect x="157" y="523" width="140" height="15" fill="#cccccc" />
<rect x="157" y="523" width="140" height="1" fill="#ffffff" />
<rect x="157" y="523" width="1" height="15" fill="#ffffff" />
<rect x="296" y="523" width="1" height="15" fill="#666666" />
<rect x="157" y="537" width="140" height="1" fill="#666666" />
<text x="209.5" y="536" font-family="&quot;Liberation Sans&quot;, sans-serif" font-size="12" font-weight="normal" fill="#000" text-anchor="start" textLength="34.22" lengthAdjust="spacing" >Name</text>
<rect x="297" y="523" width="60" height="15" fill="#cccccc" />
<rect x="297" y="523" width="60" height="1" fill="#ffffff" />
<rect x="297" y="523" width="1" height="15" fill="#ffffff" />
<rect x="356" y="523" width="1" height="15" fill="#666666" />
<rect x="297" y="537" width="60" height="1" fill="#666666" />
<text x="314.2" y="536" font-family="&quot;Liberation Sans&quot;, sans-serif" font-size="12" font-weight="normal" fill="#000" text-anchor="start" textLength="25.62" lengthAdjust="spacing" >Type</text>
<rect x="357" y="523" width="50" height="15" fill="#cccccc" />
<rect x="357" y="523" width="50" height="1" fill="#ffffff" />
<rect x="357" y="523" width="1" height="15" fill="#ffffff" />
<rect x="406" y="523" width="1" height="15" fill="#666666" />
<rect x="357" y="537" width="50" height="1" fill="#666666" />
<text x="360.7" y="536" font-family="&quot;Liberation Sans&quot;, sans-serif" font-size="12" font-weight="normal" fill="#000" text-anchor="start" textLength="41.96" lengthAdjust="spacing" >Amount</text>
<rect x="407" y="523" width="60" height="15" fill="#cccccc" />
<rect x="407" y="523" width="60" height="1" fill="#ffffff" />
<rect x="407" y="523" width="1" height="15" fill="#ffffff" />
<rect x="466" y="523" width="1" height="15" fill="#666666" />
<rect x="407" y="537" width="60" height="1" fill="#666666" />
<text x="414.7" y="536" font-family="&quot;Liberation Sans&quot;, sans-serif" font-size="12" font-weight="normal" fill="#000" text-anchor="start" textLength="44.83" lengthAdjust="spacing" >Need IC</text>
<rect x="467" y="523" width="60" height="15" fill="#cccccc" />
<rect x="467" y="523" width="60" height="1" fill="#ffffff" />
<rect x="467" y="523" width="1" height="15" fill="#ffffff" />
<rect x="526" y="523" width="1" height="15" fill="#666666" />
<rect x="467" y="537" width="60" height="1" fill="#666666" />
<text x="475.2" y="536" font-family="&quot;Liberation Sans&quot;, sans-serif" font-size="12" font-weight="normal" fill="#000" text-anchor="start" textLength="43.36" lengthAdjust="spacing" >Percent</text>
<rect x="527" y="523" width="50" height="15" fill="#cccccc" />
<rect x="527" y="523" width="50" height="1" fill="#ffffff" />
<rect x="527" y="523" width="1" height="15" fill="#ffffff" />
<rect x="576" y="523" width="1" height="15" fill="#666666" />
<rect x="527" y="537" width="50" height="1" fill="#666666" />
<text x="534.3" y="536" font-family="&quot;Liberation Sans&quot;, sans-serif" font-size="12" font-weight="normal" fill="#000" text-anchor="start" textLength="35.02" lengthAdjust="spacing" >Finish</text>
<rect x="128" y="538" width="449" height="16" fill="#5a5a98" />
<rect x="157" y="538" width="1" height="16" fill="#9a9ac0" />
<rect x="297" y="538" width="1" height="16" fill="#9a9ac0" />
<rect x="357" y="538" width="1" height="16" fill="#9a9ac0" />
<rect x="407" y="538" width="1" height="16" fill="#9a9ac0" />
<rect x="467" y="538" width="1" height="16" fill="#9a9ac0" />
<rect x="527" y="538" width="1" height="16" fill="#9a9ac0" />
<text x="129.7" y="551" font-family="&quot;Liberation Sans&quot;, sans-serif" font-size="12" font-weight="normal" fill="#ffffff" text-anchor="start" textLength="5.29" lengthAdjust="spacing" >0</text>
<text x="158.5" y="551" font-family="&quot;Liberation Sans&quot;, sans-serif" font-size="12" font-weight="normal" fill="#ffffff" text-anchor="start" textLength="71.70" lengthAdjust="spacing" >Infrastruktúra</text>
<text x="298.0" y="551" font-family="&quot;Liberation Sans&quot;, sans-serif" font-size="12" font-weight="normal" fill="#ffffff" text-anchor="start" textLength="40.96" lengthAdjust="spacing" >Lokális</text>
<text x="359.8" y="551" font-family="&quot;Liberation Sans&quot;, sans-serif" font-size="12" font-weight="normal" fill="#ffffff" text-anchor="start" textLength="3.89" lengthAdjust="spacing" >1</text>
<text x="408.6" y="551" font-family="&quot;Liberation Sans&quot;, sans-serif" font-size="12" font-weight="normal" fill="#ffffff" text-anchor="start" textLength="21.03" lengthAdjust="spacing" >340</text>
<text x="469.4" y="551" font-family="&quot;Liberation Sans&quot;, sans-serif" font-size="12" font-weight="normal" fill="#ffffff" text-anchor="start" textLength="6.89" lengthAdjust="spacing" >0</text>
<text x="529.7" y="551" font-family="&quot;Liberation Sans&quot;, sans-serif" font-size="12" font-weight="normal" fill="#ffffff" text-anchor="start" textLength="6.89" lengthAdjust="spacing" >0</text>
<rect x="587" y="532" width="20" height="20" fill="#cccccc" />
<rect x="588" y="551" width="19" height="1" fill="#ffffff" />
<rect x="606" y="533" width="1" height="19" fill="#ffffff" />
<rect x="588" y="533" width="18" height="1" fill="#ffffff" />
<rect x="588" y="533" width="1" height="18" fill="#ffffff" />
<rect x="587" y="532" width="19" height="1" fill="#808080" />
<rect x="587" y="532" width="1" height="19" fill="#808080" />
<rect x="587" y="550" width="19" height="1" fill="#808080" />
<rect x="605" y="532" width="1" height="19" fill="#808080" />
<polygon points="597,533.5 605.5,545.5 605.5,550 589,550 589,545.5" fill="#000" shape-rendering="geometricPrecision"/>
<rect x="587" y="552" width="20" height="20" fill="#cccccc" />
<rect x="588" y="571" width="19" height="1" fill="#ffffff" />
<rect x="606" y="553" width="1" height="19" fill="#ffffff" />
<rect x="588" y="553" width="18" height="1" fill="#ffffff" />
<rect x="588" y="553" width="1" height="18" fill="#ffffff" />
<rect x="587" y="552" width="19" height="1" fill="#808080" />
<rect x="587" y="552" width="1" height="19" fill="#808080" />
<rect x="587" y="570" width="19" height="1" fill="#808080" />
<rect x="605" y="552" width="1" height="19" fill="#808080" />
<polygon points="589,553 605.5,553 605.5,557 597,570 589,557" fill="#000" shape-rendering="geometricPrecision"/>
<rect x="587" y="582" width="20" height="20" fill="#cccccc" />
<rect x="588" y="601" width="19" height="1" fill="#ffffff" />
<rect x="606" y="583" width="1" height="19" fill="#ffffff" />
<rect x="588" y="583" width="18" height="1" fill="#ffffff" />
<rect x="588" y="583" width="1" height="18" fill="#ffffff" />
<rect x="587" y="582" width="19" height="1" fill="#808080" />
<rect x="587" y="582" width="1" height="19" fill="#808080" />
<rect x="587" y="600" width="19" height="1" fill="#808080" />
<rect x="605" y="582" width="1" height="19" fill="#808080" />
<path d="M590,585 L604,599 M604,585 L590,599" stroke="#e00000" stroke-width="3" shape-rendering="geometricPrecision"/>
<rect x="617" y="522" width="250" height="20" fill="#cccccc" />
<rect x="617" y="522" width="250" height="1" fill="#999999" />
<rect x="617" y="522" width="1" height="20" fill="#999999" />
<rect x="617" y="541" width="250" height="1" fill="#999999" />
<rect x="866" y="522" width="1" height="20" fill="#999999" />
<text x="618.8" y="538" font-family="&quot;Liberation Serif&quot;, serif" font-size="14" font-weight="normal" fill="#000" text-anchor="start" textLength="81.37" lengthAdjust="spacing" >Infrastruktúra</text>
<rect x="618" y="571" width="249" height="1" fill="#ffffff" />
<rect x="866" y="553" width="1" height="19" fill="#ffffff" />
<rect x="618" y="553" width="248" height="1" fill="#ffffff" />
<rect x="618" y="553" width="1" height="18" fill="#ffffff" />
<rect x="617" y="552" width="249" height="1" fill="#666666" />
<rect x="617" y="552" width="1" height="19" fill="#666666" />
<rect x="617" y="570" width="249" height="1" fill="#666666" />
<rect x="865" y="552" width="1" height="19" fill="#666666" />
<text x="699.3" y="567" font-family="&quot;Liberation Sans&quot;, sans-serif" font-size="12" font-weight="bold" fill="#000" stroke="#000" stroke-width="0.2" text-anchor="start" textLength="84.22" lengthAdjust="spacing" >Choiche object</text>
<text x="615.7" y="597" font-family="&quot;Liberation Sans&quot;, sans-serif" font-size="12" font-weight="bold" fill="#000" stroke="#000" stroke-width="0.2" text-anchor="start" textLength="57.02" lengthAdjust="spacing" >Need min:</text>
<rect x="677" y="582" width="60" height="20" fill="#cccccc" />
<rect x="677" y="582" width="60" height="1" fill="#999999" />
<rect x="677" y="582" width="1" height="20" fill="#999999" />
<rect x="677" y="601" width="60" height="1" fill="#999999" />
<rect x="736" y="582" width="1" height="20" fill="#999999" />
<text x="678.8" y="598" font-family="&quot;Liberation Serif&quot;, serif" font-size="14" font-weight="normal" fill="#000" text-anchor="start" textLength="21.00" lengthAdjust="spacing" >500</text>
<text x="745.6" y="597" font-family="&quot;Liberation Sans&quot;, sans-serif" font-size="12" font-weight="bold" fill="#000" stroke="#000" stroke-width="0.2" text-anchor="start" textLength="48.63" lengthAdjust="spacing" >Need cr:</text>
<rect x="807" y="582" width="60" height="20" fill="#cccccc" />
<rect x="807" y="582" width="60" height="1" fill="#999999" />
<rect x="807" y="582" width="1" height="20" fill="#999999" />
<rect x="807" y="601" width="60" height="1" fill="#999999" />
<rect x="866" y="582" width="1" height="20" fill="#999999" />
<text x="808.0" y="598" font-family="&quot;Liberation Serif&quot;, serif" font-size="14" font-weight="normal" fill="#000" text-anchor="start" textLength="21.40" lengthAdjust="spacing" >500</text>
</svg>
</body></html>
